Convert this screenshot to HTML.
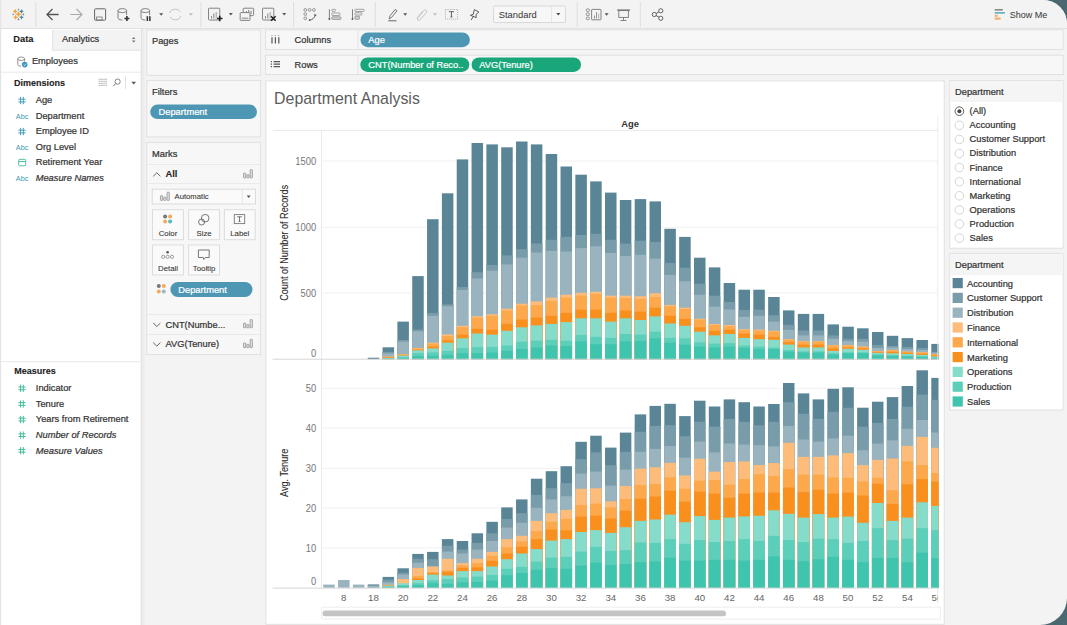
<!DOCTYPE html>
<html><head><meta charset="utf-8">
<style>
html,body{margin:0;padding:0;width:1067px;height:625px;overflow:hidden;background:#4b6871;}
#app{position:absolute;left:0;top:0;width:1067px;height:625px;background:#f3f3f3;border-top-right-radius:24px;border-bottom-right-radius:27px;overflow:hidden;}
svg{position:absolute;left:0;top:0;}
svg text{font-family:"Liberation Sans", sans-serif;}
.tx{stroke-width:0.22px;}
</style></head><body>
<div id="app">
<svg width="1067" height="625" viewBox="0 0 1067 625">
  <rect x="0" y="0" width="1067" height="28" fill="#f3f3f3"/>
  <rect x="0" y="28.2" width="1067" height="0.9" fill="#dcdcdc"/>
  <rect x="0" y="0" width="1.3" height="625" fill="#e4e4e4"/>
  <!-- data pane -->
  <rect x="1.3" y="29" width="139.7" height="596" fill="#ffffff"/>
  <rect x="140.6" y="29" width="1.4" height="596" fill="#e4e4e4"/>
  <rect x="142" y="29" width="2.5" height="596" fill="#ececec"/>
  <rect x="52.3" y="29.8" width="88.3" height="20.4" fill="#f3f3f3"/>
  <rect x="52.3" y="29.8" width="0.9" height="20.4" fill="#dedede"/>
  <rect x="52.3" y="49.8" width="88.3" height="0.9" fill="#dedede"/>
  <rect x="1.3" y="71.7" width="139.3" height="0.9" fill="#e6e6e6"/>
  <rect x="1.3" y="361.3" width="139.3" height="0.9" fill="#e6e6e6"/>
  <text class="tx" x="13.3" y="42.4" font-size="9.3" fill="#222" stroke="#222" font-weight="bold" font-style="normal" text-anchor="start"  style="stroke-width:0.1px">Data</text>
<text class="tx" x="62" y="42.4" font-size="9.3" fill="#333" stroke="#333" font-weight="normal" font-style="normal" text-anchor="start"  >Analytics</text>
<path d="M131.9,39 L133.7,37 L135.5,39Z M131.9,40.6 L133.7,42.6 L135.5,40.6Z" fill="#777"/>
<path d="M17.8,58.8 V64.5 Q17.8,66.3 21,66.3 M24.6,58.8 V61.5 M17.8,58.8 Q17.8,57 21.2,57 Q24.6,57 24.6,58.8 Q24.6,60.5 21.2,60.5 Q17.8,60.5 17.8,58.8" fill="none" stroke="#888" stroke-width="0.9"/>
<circle cx="24.7" cy="64.6" r="2.8" fill="#3a98c4"/><path d="M23.5,64.7 L24.4,65.6 L26,63.7" fill="none" stroke="#fff" stroke-width="0.7"/>
<text class="tx" x="31.9" y="64.4" font-size="9.3" fill="#333" stroke="#333" font-weight="normal" font-style="normal" text-anchor="start"  >Employees</text>
<text class="tx" x="14.1" y="86" font-size="9.0" fill="#222" stroke="#222" font-weight="bold" font-style="normal" text-anchor="start"  style="stroke-width:0.1px">Dimensions</text>
<path d="M98.6,79.3 H107 M98.6,81.3 H107 M98.6,83.3 H107 M98.6,85.3 H107" stroke="#aaa" stroke-width="0.9"/>
<path d="M100.6,79 V85.8 M103,79 V85.8 M105.2,79 V85.8" stroke="#fff" stroke-width="0.5"/>
<circle cx="117.6" cy="81.6" r="2.6" fill="none" stroke="#777" stroke-width="0.9"/><path d="M115.7,83.6 L113.3,86.2" stroke="#777" stroke-width="1"/>
<rect x="125" y="76" width="0.8" height="13" fill="#ddd"/>
<path d="M131.4,81.7 L136,81.7 L133.7,84.4Z" fill="#555"/>
<path d="M20.599999999999998,96.89999999999999 V104.19999999999999 M23.299999999999997,96.89999999999999 V104.19999999999999 M18.4,99.19999999999999 H25.599999999999998 M18.4,101.89999999999999 H25.599999999999998" stroke="#3d9bb8" stroke-width="0.95" fill="none"/>
<text class="tx" x="35.7" y="103.3" font-size="9.3" fill="#333" stroke="#333" font-weight="normal" font-style="normal" text-anchor="start"  >Age</text>
<text x="15.8" y="118.5" font-size="7.3" fill="#3d9bb8">Abc</text>
<text class="tx" x="35.7" y="118.8" font-size="9.3" fill="#333" stroke="#333" font-weight="normal" font-style="normal" text-anchor="start"  >Department</text>
<path d="M20.599999999999998,127.9 V135.20000000000002 M23.299999999999997,127.9 V135.20000000000002 M18.4,130.20000000000002 H25.599999999999998 M18.4,132.9 H25.599999999999998" stroke="#3d9bb8" stroke-width="0.95" fill="none"/>
<text class="tx" x="35.7" y="134.3" font-size="9.3" fill="#333" stroke="#333" font-weight="normal" font-style="normal" text-anchor="start"  >Employee ID</text>
<text x="15.8" y="149.5" font-size="7.3" fill="#3d9bb8">Abc</text>
<text class="tx" x="35.7" y="149.8" font-size="9.3" fill="#333" stroke="#333" font-weight="normal" font-style="normal" text-anchor="start"  >Org Level</text>
<rect x="18.7" y="159.3" width="7" height="6.5" rx="1" fill="none" stroke="#3fb89a" stroke-width="0.9"/><rect x="18.7" y="161.10000000000002" width="7" height="0.9" fill="#3fb89a"/>
<text class="tx" x="35.7" y="165.3" font-size="9.3" fill="#333" stroke="#333" font-weight="normal" font-style="normal" text-anchor="start"  >Retirement Year</text>
<text x="15.8" y="180.5" font-size="7.3" fill="#3d9bb8">Abc</text>
<text class="tx" x="35.7" y="180.8" font-size="9.3" fill="#333" stroke="#333" font-weight="normal" font-style="italic" text-anchor="start"  >Measure Names</text>
<text class="tx" x="14.3" y="373.6" font-size="9.0" fill="#222" stroke="#222" font-weight="bold" font-style="normal" text-anchor="start"  style="stroke-width:0.1px">Measures</text>
<path d="M20.599999999999998,384.70000000000005 V392.00000000000006 M23.299999999999997,384.70000000000005 V392.00000000000006 M18.4,387.00000000000006 H25.599999999999998 M18.4,389.70000000000005 H25.599999999999998" stroke="#3fb89a" stroke-width="0.95" fill="none"/>
<text class="tx" x="35.8" y="391.1" font-size="9.3" fill="#333" stroke="#333" font-weight="normal" font-style="normal" text-anchor="start"  >Indicator</text>
<path d="M20.599999999999998,400.30000000000007 V407.6000000000001 M23.299999999999997,400.30000000000007 V407.6000000000001 M18.4,402.6000000000001 H25.599999999999998 M18.4,405.30000000000007 H25.599999999999998" stroke="#3fb89a" stroke-width="0.95" fill="none"/>
<text class="tx" x="35.8" y="406.70000000000005" font-size="9.3" fill="#333" stroke="#333" font-weight="normal" font-style="normal" text-anchor="start"  >Tenure</text>
<path d="M20.599999999999998,415.90000000000003 V423.20000000000005 M23.299999999999997,415.90000000000003 V423.20000000000005 M18.4,418.20000000000005 H25.599999999999998 M18.4,420.90000000000003 H25.599999999999998" stroke="#3fb89a" stroke-width="0.95" fill="none"/>
<text class="tx" x="35.8" y="422.3" font-size="9.3" fill="#333" stroke="#333" font-weight="normal" font-style="normal" text-anchor="start"  >Years from Retirement</text>
<path d="M20.599999999999998,431.50000000000006 V438.80000000000007 M23.299999999999997,431.50000000000006 V438.80000000000007 M18.4,433.80000000000007 H25.599999999999998 M18.4,436.50000000000006 H25.599999999999998" stroke="#3fb89a" stroke-width="0.95" fill="none"/>
<text class="tx" x="35.8" y="437.90000000000003" font-size="9.3" fill="#333" stroke="#333" font-weight="normal" font-style="italic" text-anchor="start"  >Number of Records</text>
<path d="M20.599999999999998,447.1 V454.40000000000003 M23.299999999999997,447.1 V454.40000000000003 M18.4,449.40000000000003 H25.599999999999998 M18.4,452.1 H25.599999999999998" stroke="#3fb89a" stroke-width="0.95" fill="none"/>
<text class="tx" x="35.8" y="453.5" font-size="9.3" fill="#333" stroke="#333" font-weight="normal" font-style="italic" text-anchor="start"  >Measure Values</text>
  <!-- middle column cards -->
  <rect x="146.8" y="30" width="113.8" height="45.3" fill="#f7f7f7" stroke="#dedede" stroke-width="0.9"/>
  <text class="tx" x="152" y="44.2" font-size="9.3" fill="#333" stroke="#333" font-weight="normal" font-style="normal" text-anchor="start"  >Pages</text>
  <rect x="146.8" y="80.6" width="113.8" height="56.3" fill="#f7f7f7" stroke="#dedede" stroke-width="0.9"/>
  <text class="tx" x="152" y="94.6" font-size="9.3" fill="#333" stroke="#333" font-weight="normal" font-style="normal" text-anchor="start"  >Filters</text>
  <rect x="150.2" y="104.5" width="106.8" height="14.6" rx="7.3" fill="#4e97b4"/>
  <text class="tx" x="158.5" y="115.1" font-size="9.3" fill="#fff" stroke="#fff" font-weight="normal" font-style="normal" text-anchor="start"  >Department</text>
  <rect x="146.8" y="142.3" width="113.8" height="212.3" fill="#f7f7f7" stroke="#dedede" stroke-width="0.9"/>
  <text class="tx" x="152" y="156.9" font-size="9.3" fill="#333" stroke="#333" font-weight="normal" font-style="normal" text-anchor="start"  >Marks</text>
<rect x="147" y="164" width="113.5" height="0.8" fill="#e6e6e6"/>
<path d="M153.2,176.3 L156.79999999999998,172.8 L160.39999999999998,176.3" fill="none" stroke="#666" stroke-width="1"/>
<text class="tx" x="165.5" y="177.3" font-size="9.3" fill="#222" stroke="#222" font-weight="bold" font-style="normal" text-anchor="start"  style="stroke-width:0.1px">All</text>
<rect x="243.54999999999998" y="173.20000000000002" width="2.2" height="4.7" rx="0.5" fill="#e4e4e4" stroke="#8a8a8a" stroke-width="0.75"/><rect x="246.85" y="174.70000000000002" width="2.2" height="3.2" rx="0.5" fill="#e4e4e4" stroke="#8a8a8a" stroke-width="0.75"/><rect x="250.15" y="169.70000000000002" width="2.2" height="8.2" rx="0.5" fill="#e4e4e4" stroke="#8a8a8a" stroke-width="0.75"/>
<rect x="147" y="183" width="113.5" height="0.8" fill="#e6e6e6"/>
<rect x="152.2" y="189.2" width="103.3" height="14.8" fill="#fafafa" stroke="#d8d8d8" stroke-width="0.9"/>
<rect x="241.8" y="189.6" width="0.8" height="14" fill="#e0e0e0"/>
<rect x="160.45" y="195.70000000000002" width="2.2" height="4.7" rx="0.5" fill="#e4e4e4" stroke="#8a8a8a" stroke-width="0.75"/><rect x="163.75" y="197.20000000000002" width="2.2" height="3.2" rx="0.5" fill="#e4e4e4" stroke="#8a8a8a" stroke-width="0.75"/><rect x="167.05" y="192.20000000000002" width="2.2" height="8.2" rx="0.5" fill="#e4e4e4" stroke="#8a8a8a" stroke-width="0.75"/>
<text class="tx" x="174.5" y="198.5" font-size="7.7" fill="#333" stroke="#333" font-weight="normal" font-style="normal" text-anchor="start" style="stroke-width:0.08px" >Automatic</text>
<path d="M246.7,195.60000000000002 L250.7,195.60000000000002 L248.7,198.10000000000002Z" fill="#555"/>
<rect x="152.54999999999998" y="209.75" width="30.8" height="30" fill="#fafafa" stroke="#d9d9d9" stroke-width="0.9"/>
<text class="tx" x="168.0" y="236.20000000000002" font-size="7.8" fill="#333" stroke="#333" font-weight="normal" font-style="normal" text-anchor="middle" style="stroke-width:0.08px" >Color</text>
<rect x="188.64999999999998" y="209.75" width="30.8" height="30" fill="#fafafa" stroke="#d9d9d9" stroke-width="0.9"/>
<text class="tx" x="204.1" y="236.20000000000002" font-size="7.8" fill="#333" stroke="#333" font-weight="normal" font-style="normal" text-anchor="middle" style="stroke-width:0.08px" >Size</text>
<rect x="224.35" y="209.75" width="30.8" height="30" fill="#fafafa" stroke="#d9d9d9" stroke-width="0.9"/>
<text class="tx" x="239.8" y="236.20000000000002" font-size="7.8" fill="#333" stroke="#333" font-weight="normal" font-style="normal" text-anchor="middle" style="stroke-width:0.08px" >Label</text>
<rect x="152.54999999999998" y="244.95" width="30.8" height="30" fill="#fafafa" stroke="#d9d9d9" stroke-width="0.9"/>
<text class="tx" x="168.0" y="271.4" font-size="7.8" fill="#333" stroke="#333" font-weight="normal" font-style="normal" text-anchor="middle" style="stroke-width:0.08px" >Detail</text>
<rect x="188.64999999999998" y="244.95" width="30.8" height="30" fill="#fafafa" stroke="#d9d9d9" stroke-width="0.9"/>
<text class="tx" x="204.1" y="271.4" font-size="7.8" fill="#333" stroke="#333" font-weight="normal" font-style="normal" text-anchor="middle" style="stroke-width:0.08px" >Tooltip</text>
<circle cx="165.1" cy="216.4" r="2" fill="#777"/><circle cx="170.1" cy="216.4" r="2" fill="#f5a95b"/><circle cx="165.1" cy="221.4" r="2" fill="#f5a95b"/><circle cx="170.1" cy="221.4" r="2" fill="#5ab8c0"/>
<circle cx="201.6" cy="222" r="3" fill="none" stroke="#666" stroke-width="0.9"/><circle cx="205.2" cy="218.2" r="3.8" fill="none" stroke="#666" stroke-width="0.9"/>
<rect x="234.3" y="214.6" width="10.4" height="9" fill="none" stroke="#777" stroke-width="0.9"/>
<path d="M237.1,216.8 H241.9 M239.5,216.8 V221.4 M238.5,221.4 H240.5" fill="none" stroke="#555" stroke-width="0.8"/>
<circle cx="167.6" cy="252.3" r="1.3" fill="#555"/>
<circle cx="163.2" cy="256.8" r="1.6" fill="none" stroke="#777" stroke-width="0.7"/>
<circle cx="167.6" cy="256.8" r="1.6" fill="none" stroke="#777" stroke-width="0.7"/>
<circle cx="172" cy="256.8" r="1.6" fill="none" stroke="#777" stroke-width="0.7"/>
<path d="M198.4,250 H209.2 V257.5 H205.5 L203.8,259.5 L203.2,257.5 H198.4 Z" fill="none" stroke="#666" stroke-width="0.9"/>
<circle cx="158.8" cy="286" r="2" fill="#777"/><circle cx="163.8" cy="286" r="2" fill="#f5a95b"/><circle cx="158.8" cy="291.4" r="2" fill="#f5a95b"/><circle cx="163.8" cy="291.4" r="2" fill="#9ab8c4"/>
<rect x="170.4" y="282.1" width="82.1" height="14.9" rx="7.45" fill="#4e97b4"/>
<text class="tx" x="178.3" y="292.9" font-size="9.3" fill="#fff" stroke="#fff" font-weight="normal" font-style="normal" text-anchor="start"  >Department</text>
<rect x="147" y="314" width="113.5" height="0.8" fill="#e6e6e6"/>
<path d="M153.2,323 L156.79999999999998,326.5 L160.39999999999998,323" fill="none" stroke="#666" stroke-width="1"/>
<text class="tx" x="165.5" y="327.6" font-size="9.3" fill="#333" stroke="#333" font-weight="normal" font-style="normal" text-anchor="start"  >CNT(Numbe...</text>
<rect x="243.54999999999998" y="323.09999999999997" width="2.2" height="4.7" rx="0.5" fill="#e4e4e4" stroke="#8a8a8a" stroke-width="0.75"/><rect x="246.85" y="324.59999999999997" width="2.2" height="3.2" rx="0.5" fill="#e4e4e4" stroke="#8a8a8a" stroke-width="0.75"/><rect x="250.15" y="319.59999999999997" width="2.2" height="8.2" rx="0.5" fill="#e4e4e4" stroke="#8a8a8a" stroke-width="0.75"/>
<rect x="147" y="334" width="113.5" height="0.8" fill="#e6e6e6"/>
<path d="M153.2,342.6 L156.79999999999998,346.1 L160.39999999999998,342.6" fill="none" stroke="#666" stroke-width="1"/>
<text class="tx" x="165.5" y="347.2" font-size="9.3" fill="#333" stroke="#333" font-weight="normal" font-style="normal" text-anchor="start"  >AVG(Tenure)</text>
<rect x="243.54999999999998" y="342.9" width="2.2" height="4.7" rx="0.5" fill="#e4e4e4" stroke="#8a8a8a" stroke-width="0.75"/><rect x="246.85" y="344.4" width="2.2" height="3.2" rx="0.5" fill="#e4e4e4" stroke="#8a8a8a" stroke-width="0.75"/><rect x="250.15" y="339.4" width="2.2" height="8.2" rx="0.5" fill="#e4e4e4" stroke="#8a8a8a" stroke-width="0.75"/>
  <!-- shelves -->
  <rect x="265.6" y="29.9" width="797.6" height="19.6" fill="#f7f7f7" stroke="#dedede" stroke-width="0.9"/>
  <rect x="265.6" y="55.2" width="797.6" height="19.4" fill="#f7f7f7" stroke="#dedede" stroke-width="0.9"/>
  <rect x="357.5" y="30.3" width="0.9" height="18.8" fill="#e0e0e0"/>
  <rect x="357.5" y="55.6" width="0.9" height="18.6" fill="#e0e0e0"/>
  <path d="M272,37.2 V43.6 M275.4,37.2 V43.6 M278.8,37.2 V43.6" stroke="#555" stroke-width="1.2"/>
  <path d="M272,35.4 V36 M275.4,35.4 V36 M278.8,35.4 V36" stroke="#555" stroke-width="1.2"/>
  <path d="M273.6,61.6 H280 M273.6,64.1 H280 M273.6,66.6 H280" stroke="#555" stroke-width="1.1"/>
  <path d="M270.8,61.6 H272 M270.8,64.1 H272 M270.8,66.6 H272" stroke="#555" stroke-width="1.1"/>
  <text class="tx" x="294.5" y="43" font-size="9.3" fill="#333" stroke="#333" font-weight="normal" font-style="normal" text-anchor="start"  >Columns</text>
  <text class="tx" x="294.5" y="68.3" font-size="9.3" fill="#333" stroke="#333" font-weight="normal" font-style="normal" text-anchor="start"  >Rows</text>
  <rect x="360.5" y="32.6" width="109.4" height="14.6" rx="7.3" fill="#4e97b4"/>
  <text class="tx" x="368.3" y="43.4" font-size="9.3" fill="#fff" stroke="#fff" font-weight="normal" font-style="normal" text-anchor="start"  >Age</text>
  <rect x="360.3" y="57.4" width="109" height="14.6" rx="7.3" fill="#19a67b"/>
  <text class="tx" x="368.3" y="68.3" font-size="9.3" fill="#fff" stroke="#fff" font-weight="normal" font-style="normal" text-anchor="start"  >CNT(Number of Reco..</text>
  <rect x="471.6" y="57.4" width="109.4" height="14.6" rx="7.3" fill="#19a67b"/>
  <text class="tx" x="479.3" y="68.3" font-size="9.3" fill="#fff" stroke="#fff" font-weight="normal" font-style="normal" text-anchor="start"  >AVG(Tenure)</text>
  <!-- viz pane -->
  <rect x="265.9" y="80.9" width="678.3" height="543.4" fill="#ffffff" stroke="#dedede" stroke-width="0.9"/>
  <text class="tx" x="274.1" y="104.3" font-size="15.9" fill="#5c5c5c" stroke="#5c5c5c" font-weight="normal" font-style="normal" text-anchor="start"  style="stroke:none">Department Analysis</text>
  <text class="tx" x="630" y="126.5" font-size="9.4" fill="#333" stroke="#333" font-weight="bold" font-style="normal" text-anchor="middle"  style="stroke:none">Age</text>
  <rect x="273" y="129.9" width="665" height="0.9" fill="#e6e6e6"/>
  <rect x="321" y="130" width="0.9" height="458.6" fill="#e8e8e8"/><rect x="321.3" y="607" width="0.8" height="12" fill="#ececec"/>
  <rect x="322" y="160.6" width="616" height="0.8" fill="#ededed"/>
  <rect x="322" y="226.8" width="616" height="0.8" fill="#ededed"/>
  <rect x="322" y="292.7" width="616" height="0.8" fill="#ededed"/>
  <g transform="translate(316.2,164.70) scale(1,1.14)"><text class="tx" x="0" y="0" font-size="9.4" fill="#777" stroke="#777" font-weight="normal" font-style="normal" text-anchor="end"  style="stroke:none">1500</text></g><g transform="translate(316.2,231.00) scale(1,1.14)"><text class="tx" x="0" y="0" font-size="9.4" fill="#777" stroke="#777" font-weight="normal" font-style="normal" text-anchor="end"  style="stroke:none">1000</text></g><g transform="translate(316.2,296.90) scale(1,1.14)"><text class="tx" x="0" y="0" font-size="9.4" fill="#777" stroke="#777" font-weight="normal" font-style="normal" text-anchor="end"  style="stroke:none">500</text></g><g transform="translate(316.2,357.00) scale(1,1.14)"><text class="tx" x="0" y="0" font-size="9.4" fill="#777" stroke="#777" font-weight="normal" font-style="normal" text-anchor="end"  style="stroke:none">0</text></g>
  <rect x="322" y="387.8" width="616" height="0.8" fill="#ededed"/>
  <rect x="322" y="427.6" width="616" height="0.8" fill="#ededed"/>
  <rect x="322" y="467.9" width="616" height="0.8" fill="#ededed"/>
  <rect x="322" y="507.6" width="616" height="0.8" fill="#ededed"/>
  <rect x="322" y="547.5" width="616" height="0.8" fill="#ededed"/>
  <g transform="translate(316.2,392.00) scale(1,1.14)"><text class="tx" x="0" y="0" font-size="9.4" fill="#777" stroke="#777" font-weight="normal" font-style="normal" text-anchor="end"  style="stroke:none">50</text></g><g transform="translate(316.2,431.70) scale(1,1.14)"><text class="tx" x="0" y="0" font-size="9.4" fill="#777" stroke="#777" font-weight="normal" font-style="normal" text-anchor="end"  style="stroke:none">40</text></g><g transform="translate(316.2,472.20) scale(1,1.14)"><text class="tx" x="0" y="0" font-size="9.4" fill="#777" stroke="#777" font-weight="normal" font-style="normal" text-anchor="end"  style="stroke:none">30</text></g><g transform="translate(316.2,511.80) scale(1,1.14)"><text class="tx" x="0" y="0" font-size="9.4" fill="#777" stroke="#777" font-weight="normal" font-style="normal" text-anchor="end"  style="stroke:none">20</text></g><g transform="translate(316.2,551.70) scale(1,1.14)"><text class="tx" x="0" y="0" font-size="9.4" fill="#777" stroke="#777" font-weight="normal" font-style="normal" text-anchor="end"  style="stroke:none">10</text></g><g transform="translate(316.2,584.70) scale(1,1.14)"><text class="tx" x="0" y="0" font-size="9.4" fill="#777" stroke="#777" font-weight="normal" font-style="normal" text-anchor="end"  style="stroke:none">0</text></g>
  <g><rect x="367.74" y="357.70" width="11.50" height="1.50" fill="#5a8596"/>
<rect x="382.57" y="347.30" width="11.50" height="11.90" fill="#5a8596"/>
<rect x="382.57" y="352.00" width="11.50" height="7.20" fill="#789ca9"/>
<rect x="382.57" y="353.50" width="11.50" height="5.70" fill="#9ab4bf"/>
<rect x="382.57" y="356.60" width="11.50" height="2.60" fill="#fdbc79"/>
<rect x="382.57" y="356.80" width="11.50" height="2.40" fill="#fca84b"/>
<rect x="382.57" y="357.20" width="11.50" height="2.00" fill="#f98f1d"/>
<rect x="382.57" y="357.90" width="11.50" height="1.30" fill="#86dccb"/>
<rect x="382.57" y="358.40" width="11.50" height="0.80" fill="#5ccfba"/>
<rect x="382.57" y="358.80" width="11.50" height="0.40" fill="#3fc4ae"/>
<rect x="397.40" y="321.60" width="11.50" height="37.60" fill="#5a8596"/>
<rect x="397.40" y="340.00" width="11.50" height="19.20" fill="#789ca9"/>
<rect x="397.40" y="341.70" width="11.50" height="17.50" fill="#9ab4bf"/>
<rect x="397.40" y="354.20" width="11.50" height="5.00" fill="#fdbc79"/>
<rect x="397.40" y="354.40" width="11.50" height="4.80" fill="#fca84b"/>
<rect x="397.40" y="355.00" width="11.50" height="4.20" fill="#f98f1d"/>
<rect x="397.40" y="355.50" width="11.50" height="3.70" fill="#86dccb"/>
<rect x="397.40" y="357.00" width="11.50" height="2.20" fill="#5ccfba"/>
<rect x="397.40" y="358.00" width="11.50" height="1.20" fill="#3fc4ae"/>
<rect x="412.23" y="276.10" width="11.50" height="83.10" fill="#5a8596"/>
<rect x="412.23" y="329.50" width="11.50" height="29.70" fill="#789ca9"/>
<rect x="412.23" y="331.20" width="11.50" height="28.00" fill="#9ab4bf"/>
<rect x="412.23" y="348.00" width="11.50" height="11.20" fill="#fdbc79"/>
<rect x="412.23" y="348.60" width="11.50" height="10.60" fill="#fca84b"/>
<rect x="412.23" y="349.60" width="11.50" height="9.60" fill="#f98f1d"/>
<rect x="412.23" y="350.30" width="11.50" height="8.90" fill="#86dccb"/>
<rect x="412.23" y="353.20" width="11.50" height="6.00" fill="#5ccfba"/>
<rect x="412.23" y="356.10" width="11.50" height="3.10" fill="#3fc4ae"/>
<rect x="427.06" y="219.20" width="11.50" height="140.00" fill="#5a8596"/>
<rect x="427.06" y="312.90" width="11.50" height="46.30" fill="#789ca9"/>
<rect x="427.06" y="315.80" width="11.50" height="43.40" fill="#9ab4bf"/>
<rect x="427.06" y="342.70" width="11.50" height="16.50" fill="#fdbc79"/>
<rect x="427.06" y="343.60" width="11.50" height="15.60" fill="#fca84b"/>
<rect x="427.06" y="346.50" width="11.50" height="12.70" fill="#f98f1d"/>
<rect x="427.06" y="348.40" width="11.50" height="10.80" fill="#86dccb"/>
<rect x="427.06" y="352.30" width="11.50" height="6.90" fill="#5ccfba"/>
<rect x="427.06" y="355.70" width="11.50" height="3.50" fill="#3fc4ae"/>
<rect x="441.89" y="193.30" width="11.50" height="165.90" fill="#5a8596"/>
<rect x="441.89" y="304.30" width="11.50" height="54.90" fill="#789ca9"/>
<rect x="441.89" y="306.20" width="11.50" height="53.00" fill="#9ab4bf"/>
<rect x="441.89" y="334.40" width="11.50" height="24.80" fill="#fdbc79"/>
<rect x="441.89" y="336.00" width="11.50" height="23.20" fill="#fca84b"/>
<rect x="441.89" y="340.20" width="11.50" height="19.00" fill="#f98f1d"/>
<rect x="441.89" y="342.70" width="11.50" height="16.50" fill="#86dccb"/>
<rect x="441.89" y="350.90" width="11.50" height="8.30" fill="#5ccfba"/>
<rect x="441.89" y="354.80" width="11.50" height="4.40" fill="#3fc4ae"/>
<rect x="456.72" y="159.40" width="11.50" height="199.80" fill="#5a8596"/>
<rect x="456.72" y="287.00" width="11.50" height="72.20" fill="#789ca9"/>
<rect x="456.72" y="289.90" width="11.50" height="69.30" fill="#9ab4bf"/>
<rect x="456.72" y="325.80" width="11.50" height="33.40" fill="#fdbc79"/>
<rect x="456.72" y="327.30" width="11.50" height="31.90" fill="#fca84b"/>
<rect x="456.72" y="334.60" width="11.50" height="24.60" fill="#f98f1d"/>
<rect x="456.72" y="338.30" width="11.50" height="20.90" fill="#86dccb"/>
<rect x="456.72" y="348.00" width="11.50" height="11.20" fill="#5ccfba"/>
<rect x="456.72" y="353.20" width="11.50" height="6.00" fill="#3fc4ae"/>
<rect x="471.55" y="143.00" width="11.50" height="216.20" fill="#5a8596"/>
<rect x="471.55" y="272.20" width="11.50" height="87.00" fill="#789ca9"/>
<rect x="471.55" y="278.40" width="11.50" height="80.80" fill="#9ab4bf"/>
<rect x="471.55" y="316.20" width="11.50" height="43.00" fill="#fdbc79"/>
<rect x="471.55" y="317.70" width="11.50" height="41.50" fill="#fca84b"/>
<rect x="471.55" y="328.80" width="11.50" height="30.40" fill="#f98f1d"/>
<rect x="471.55" y="333.50" width="11.50" height="25.70" fill="#86dccb"/>
<rect x="471.55" y="347.10" width="11.50" height="12.10" fill="#5ccfba"/>
<rect x="471.55" y="353.20" width="11.50" height="6.00" fill="#3fc4ae"/>
<rect x="486.38" y="144.40" width="11.50" height="214.80" fill="#5a8596"/>
<rect x="486.38" y="265.00" width="11.50" height="94.20" fill="#789ca9"/>
<rect x="486.38" y="270.70" width="11.50" height="88.50" fill="#9ab4bf"/>
<rect x="486.38" y="314.30" width="11.50" height="44.90" fill="#fdbc79"/>
<rect x="486.38" y="315.80" width="11.50" height="43.40" fill="#fca84b"/>
<rect x="486.38" y="329.80" width="11.50" height="29.40" fill="#f98f1d"/>
<rect x="486.38" y="334.60" width="11.50" height="24.60" fill="#86dccb"/>
<rect x="486.38" y="346.90" width="11.50" height="12.30" fill="#5ccfba"/>
<rect x="486.38" y="352.60" width="11.50" height="6.60" fill="#3fc4ae"/>
<rect x="501.21" y="147.30" width="11.50" height="211.90" fill="#5a8596"/>
<rect x="501.21" y="255.40" width="11.50" height="103.80" fill="#789ca9"/>
<rect x="501.21" y="264.40" width="11.50" height="94.80" fill="#9ab4bf"/>
<rect x="501.21" y="308.70" width="11.50" height="50.50" fill="#fdbc79"/>
<rect x="501.21" y="310.60" width="11.50" height="48.60" fill="#fca84b"/>
<rect x="501.21" y="323.90" width="11.50" height="35.30" fill="#f98f1d"/>
<rect x="501.21" y="330.80" width="11.50" height="28.40" fill="#86dccb"/>
<rect x="501.21" y="345.50" width="11.50" height="13.70" fill="#5ccfba"/>
<rect x="501.21" y="350.70" width="11.50" height="8.50" fill="#3fc4ae"/>
<rect x="516.04" y="141.50" width="11.50" height="217.70" fill="#5a8596"/>
<rect x="516.04" y="249.20" width="11.50" height="110.00" fill="#789ca9"/>
<rect x="516.04" y="257.70" width="11.50" height="101.50" fill="#9ab4bf"/>
<rect x="516.04" y="303.70" width="11.50" height="55.50" fill="#fdbc79"/>
<rect x="516.04" y="305.60" width="11.50" height="53.60" fill="#fca84b"/>
<rect x="516.04" y="319.60" width="11.50" height="39.60" fill="#f98f1d"/>
<rect x="516.04" y="327.30" width="11.50" height="31.90" fill="#86dccb"/>
<rect x="516.04" y="341.70" width="11.50" height="17.50" fill="#5ccfba"/>
<rect x="516.04" y="349.00" width="11.50" height="10.20" fill="#3fc4ae"/>
<rect x="530.87" y="144.40" width="11.50" height="214.80" fill="#5a8596"/>
<rect x="530.87" y="243.50" width="11.50" height="115.70" fill="#789ca9"/>
<rect x="530.87" y="252.50" width="11.50" height="106.70" fill="#9ab4bf"/>
<rect x="530.87" y="301.40" width="11.50" height="57.80" fill="#fdbc79"/>
<rect x="530.87" y="305.20" width="11.50" height="54.00" fill="#fca84b"/>
<rect x="530.87" y="317.70" width="11.50" height="41.50" fill="#f98f1d"/>
<rect x="530.87" y="325.40" width="11.50" height="33.80" fill="#86dccb"/>
<rect x="530.87" y="340.70" width="11.50" height="18.50" fill="#5ccfba"/>
<rect x="530.87" y="347.50" width="11.50" height="11.70" fill="#3fc4ae"/>
<rect x="545.70" y="154.00" width="11.50" height="205.20" fill="#5a8596"/>
<rect x="545.70" y="239.80" width="11.50" height="119.40" fill="#789ca9"/>
<rect x="545.70" y="250.90" width="11.50" height="108.30" fill="#9ab4bf"/>
<rect x="545.70" y="297.60" width="11.50" height="61.60" fill="#fdbc79"/>
<rect x="545.70" y="301.00" width="11.50" height="58.20" fill="#fca84b"/>
<rect x="545.70" y="315.80" width="11.50" height="43.40" fill="#f98f1d"/>
<rect x="545.70" y="323.90" width="11.50" height="35.30" fill="#86dccb"/>
<rect x="545.70" y="339.80" width="11.50" height="19.40" fill="#5ccfba"/>
<rect x="545.70" y="345.50" width="11.50" height="13.70" fill="#3fc4ae"/>
<rect x="560.53" y="166.50" width="11.50" height="192.70" fill="#5a8596"/>
<rect x="560.53" y="236.90" width="11.50" height="122.30" fill="#789ca9"/>
<rect x="560.53" y="251.50" width="11.50" height="107.70" fill="#9ab4bf"/>
<rect x="560.53" y="294.70" width="11.50" height="64.50" fill="#fdbc79"/>
<rect x="560.53" y="297.60" width="11.50" height="61.60" fill="#fca84b"/>
<rect x="560.53" y="312.90" width="11.50" height="46.30" fill="#f98f1d"/>
<rect x="560.53" y="322.10" width="11.50" height="37.10" fill="#86dccb"/>
<rect x="560.53" y="340.70" width="11.50" height="18.50" fill="#5ccfba"/>
<rect x="560.53" y="346.10" width="11.50" height="13.10" fill="#3fc4ae"/>
<rect x="575.36" y="174.70" width="11.50" height="184.50" fill="#5a8596"/>
<rect x="575.36" y="235.00" width="11.50" height="124.20" fill="#789ca9"/>
<rect x="575.36" y="248.10" width="11.50" height="111.10" fill="#9ab4bf"/>
<rect x="575.36" y="292.80" width="11.50" height="66.40" fill="#fdbc79"/>
<rect x="575.36" y="295.70" width="11.50" height="63.50" fill="#fca84b"/>
<rect x="575.36" y="309.70" width="11.50" height="49.50" fill="#f98f1d"/>
<rect x="575.36" y="318.30" width="11.50" height="40.90" fill="#86dccb"/>
<rect x="575.36" y="335.00" width="11.50" height="24.20" fill="#5ccfba"/>
<rect x="575.36" y="341.30" width="11.50" height="17.90" fill="#3fc4ae"/>
<rect x="590.19" y="181.40" width="11.50" height="177.80" fill="#5a8596"/>
<rect x="590.19" y="233.80" width="11.50" height="125.40" fill="#789ca9"/>
<rect x="590.19" y="246.30" width="11.50" height="112.90" fill="#9ab4bf"/>
<rect x="590.19" y="291.80" width="11.50" height="67.40" fill="#fdbc79"/>
<rect x="590.19" y="294.10" width="11.50" height="65.10" fill="#fca84b"/>
<rect x="590.19" y="309.70" width="11.50" height="49.50" fill="#f98f1d"/>
<rect x="590.19" y="318.30" width="11.50" height="40.90" fill="#86dccb"/>
<rect x="590.19" y="336.90" width="11.50" height="22.30" fill="#5ccfba"/>
<rect x="590.19" y="344.20" width="11.50" height="15.00" fill="#3fc4ae"/>
<rect x="605.02" y="192.60" width="11.50" height="166.60" fill="#5a8596"/>
<rect x="605.02" y="239.80" width="11.50" height="119.40" fill="#789ca9"/>
<rect x="605.02" y="253.00" width="11.50" height="106.20" fill="#9ab4bf"/>
<rect x="605.02" y="295.70" width="11.50" height="63.50" fill="#fdbc79"/>
<rect x="605.02" y="297.60" width="11.50" height="61.60" fill="#fca84b"/>
<rect x="605.02" y="312.90" width="11.50" height="46.30" fill="#f98f1d"/>
<rect x="605.02" y="321.60" width="11.50" height="37.60" fill="#86dccb"/>
<rect x="605.02" y="337.90" width="11.50" height="21.30" fill="#5ccfba"/>
<rect x="605.02" y="344.20" width="11.50" height="15.00" fill="#3fc4ae"/>
<rect x="619.85" y="200.00" width="11.50" height="159.20" fill="#5a8596"/>
<rect x="619.85" y="243.60" width="11.50" height="115.60" fill="#789ca9"/>
<rect x="619.85" y="255.90" width="11.50" height="103.30" fill="#9ab4bf"/>
<rect x="619.85" y="295.70" width="11.50" height="63.50" fill="#fdbc79"/>
<rect x="619.85" y="298.00" width="11.50" height="61.20" fill="#fca84b"/>
<rect x="619.85" y="310.60" width="11.50" height="48.60" fill="#f98f1d"/>
<rect x="619.85" y="318.30" width="11.50" height="40.90" fill="#86dccb"/>
<rect x="619.85" y="334.00" width="11.50" height="25.20" fill="#5ccfba"/>
<rect x="619.85" y="341.30" width="11.50" height="17.90" fill="#3fc4ae"/>
<rect x="634.68" y="199.10" width="11.50" height="160.10" fill="#5a8596"/>
<rect x="634.68" y="240.70" width="11.50" height="118.50" fill="#789ca9"/>
<rect x="634.68" y="254.80" width="11.50" height="104.40" fill="#9ab4bf"/>
<rect x="634.68" y="296.20" width="11.50" height="63.00" fill="#fdbc79"/>
<rect x="634.68" y="298.90" width="11.50" height="60.30" fill="#fca84b"/>
<rect x="634.68" y="311.60" width="11.50" height="47.60" fill="#f98f1d"/>
<rect x="634.68" y="320.00" width="11.50" height="39.20" fill="#86dccb"/>
<rect x="634.68" y="334.60" width="11.50" height="24.60" fill="#5ccfba"/>
<rect x="634.68" y="341.10" width="11.50" height="18.10" fill="#3fc4ae"/>
<rect x="649.51" y="201.40" width="11.50" height="157.80" fill="#5a8596"/>
<rect x="649.51" y="241.90" width="11.50" height="117.30" fill="#789ca9"/>
<rect x="649.51" y="258.60" width="11.50" height="100.60" fill="#9ab4bf"/>
<rect x="649.51" y="293.20" width="11.50" height="66.00" fill="#fdbc79"/>
<rect x="649.51" y="297.00" width="11.50" height="62.20" fill="#fca84b"/>
<rect x="649.51" y="307.70" width="11.50" height="51.50" fill="#f98f1d"/>
<rect x="649.51" y="316.40" width="11.50" height="42.80" fill="#86dccb"/>
<rect x="649.51" y="331.70" width="11.50" height="27.50" fill="#5ccfba"/>
<rect x="649.51" y="338.40" width="11.50" height="20.80" fill="#3fc4ae"/>
<rect x="664.34" y="228.80" width="11.50" height="130.40" fill="#5a8596"/>
<rect x="664.34" y="263.00" width="11.50" height="96.20" fill="#789ca9"/>
<rect x="664.34" y="274.90" width="11.50" height="84.30" fill="#9ab4bf"/>
<rect x="664.34" y="304.90" width="11.50" height="54.30" fill="#fdbc79"/>
<rect x="664.34" y="306.20" width="11.50" height="53.00" fill="#fca84b"/>
<rect x="664.34" y="315.80" width="11.50" height="43.40" fill="#f98f1d"/>
<rect x="664.34" y="323.50" width="11.50" height="35.70" fill="#86dccb"/>
<rect x="664.34" y="337.90" width="11.50" height="21.30" fill="#5ccfba"/>
<rect x="664.34" y="342.70" width="11.50" height="16.50" fill="#3fc4ae"/>
<rect x="679.17" y="236.90" width="11.50" height="122.30" fill="#5a8596"/>
<rect x="679.17" y="267.80" width="11.50" height="91.40" fill="#789ca9"/>
<rect x="679.17" y="281.30" width="11.50" height="77.90" fill="#9ab4bf"/>
<rect x="679.17" y="307.70" width="11.50" height="51.50" fill="#fdbc79"/>
<rect x="679.17" y="309.10" width="11.50" height="50.10" fill="#fca84b"/>
<rect x="679.17" y="318.70" width="11.50" height="40.50" fill="#f98f1d"/>
<rect x="679.17" y="325.80" width="11.50" height="33.40" fill="#86dccb"/>
<rect x="679.17" y="338.30" width="11.50" height="20.90" fill="#5ccfba"/>
<rect x="679.17" y="344.60" width="11.50" height="14.60" fill="#3fc4ae"/>
<rect x="694.00" y="257.70" width="11.50" height="101.50" fill="#5a8596"/>
<rect x="694.00" y="283.80" width="11.50" height="75.40" fill="#789ca9"/>
<rect x="694.00" y="294.70" width="11.50" height="64.50" fill="#9ab4bf"/>
<rect x="694.00" y="318.70" width="11.50" height="40.50" fill="#fdbc79"/>
<rect x="694.00" y="319.60" width="11.50" height="39.60" fill="#fca84b"/>
<rect x="694.00" y="327.30" width="11.50" height="31.90" fill="#f98f1d"/>
<rect x="694.00" y="331.70" width="11.50" height="27.50" fill="#86dccb"/>
<rect x="694.00" y="342.30" width="11.50" height="16.90" fill="#5ccfba"/>
<rect x="694.00" y="346.50" width="11.50" height="12.70" fill="#3fc4ae"/>
<rect x="708.83" y="267.40" width="11.50" height="91.80" fill="#5a8596"/>
<rect x="708.83" y="295.70" width="11.50" height="63.50" fill="#789ca9"/>
<rect x="708.83" y="306.60" width="11.50" height="52.60" fill="#9ab4bf"/>
<rect x="708.83" y="324.10" width="11.50" height="35.10" fill="#fdbc79"/>
<rect x="708.83" y="325.00" width="11.50" height="34.20" fill="#fca84b"/>
<rect x="708.83" y="330.80" width="11.50" height="28.40" fill="#f98f1d"/>
<rect x="708.83" y="335.40" width="11.50" height="23.80" fill="#86dccb"/>
<rect x="708.83" y="343.60" width="11.50" height="15.60" fill="#5ccfba"/>
<rect x="708.83" y="347.50" width="11.50" height="11.70" fill="#3fc4ae"/>
<rect x="723.66" y="283.00" width="11.50" height="76.20" fill="#5a8596"/>
<rect x="723.66" y="302.00" width="11.50" height="57.20" fill="#789ca9"/>
<rect x="723.66" y="309.50" width="11.50" height="49.70" fill="#9ab4bf"/>
<rect x="723.66" y="325.00" width="11.50" height="34.20" fill="#fdbc79"/>
<rect x="723.66" y="326.40" width="11.50" height="32.80" fill="#fca84b"/>
<rect x="723.66" y="329.80" width="11.50" height="29.40" fill="#f98f1d"/>
<rect x="723.66" y="334.00" width="11.50" height="25.20" fill="#86dccb"/>
<rect x="723.66" y="343.10" width="11.50" height="16.10" fill="#5ccfba"/>
<rect x="723.66" y="346.50" width="11.50" height="12.70" fill="#3fc4ae"/>
<rect x="738.49" y="289.70" width="11.50" height="69.50" fill="#5a8596"/>
<rect x="738.49" y="310.00" width="11.50" height="49.20" fill="#789ca9"/>
<rect x="738.49" y="316.80" width="11.50" height="42.40" fill="#9ab4bf"/>
<rect x="738.49" y="329.20" width="11.50" height="30.00" fill="#fdbc79"/>
<rect x="738.49" y="330.20" width="11.50" height="29.00" fill="#fca84b"/>
<rect x="738.49" y="333.60" width="11.50" height="25.60" fill="#f98f1d"/>
<rect x="738.49" y="337.90" width="11.50" height="21.30" fill="#86dccb"/>
<rect x="738.49" y="345.50" width="11.50" height="13.70" fill="#5ccfba"/>
<rect x="738.49" y="347.80" width="11.50" height="11.40" fill="#3fc4ae"/>
<rect x="753.32" y="289.70" width="11.50" height="69.50" fill="#5a8596"/>
<rect x="753.32" y="309.70" width="11.50" height="49.50" fill="#789ca9"/>
<rect x="753.32" y="315.80" width="11.50" height="43.40" fill="#9ab4bf"/>
<rect x="753.32" y="329.60" width="11.50" height="29.60" fill="#fdbc79"/>
<rect x="753.32" y="330.60" width="11.50" height="28.60" fill="#fca84b"/>
<rect x="753.32" y="334.60" width="11.50" height="24.60" fill="#f98f1d"/>
<rect x="753.32" y="339.20" width="11.50" height="20.00" fill="#86dccb"/>
<rect x="753.32" y="346.50" width="11.50" height="12.70" fill="#5ccfba"/>
<rect x="753.32" y="349.00" width="11.50" height="10.20" fill="#3fc4ae"/>
<rect x="768.15" y="297.00" width="11.50" height="62.20" fill="#5a8596"/>
<rect x="768.15" y="315.20" width="11.50" height="44.00" fill="#789ca9"/>
<rect x="768.15" y="321.60" width="11.50" height="37.60" fill="#9ab4bf"/>
<rect x="768.15" y="330.80" width="11.50" height="28.40" fill="#fdbc79"/>
<rect x="768.15" y="331.70" width="11.50" height="27.50" fill="#fca84b"/>
<rect x="768.15" y="336.90" width="11.50" height="22.30" fill="#f98f1d"/>
<rect x="768.15" y="339.80" width="11.50" height="19.40" fill="#86dccb"/>
<rect x="768.15" y="347.50" width="11.50" height="11.70" fill="#5ccfba"/>
<rect x="768.15" y="349.00" width="11.50" height="10.20" fill="#3fc4ae"/>
<rect x="782.98" y="310.40" width="11.50" height="48.80" fill="#5a8596"/>
<rect x="782.98" y="324.80" width="11.50" height="34.40" fill="#789ca9"/>
<rect x="782.98" y="329.80" width="11.50" height="29.40" fill="#9ab4bf"/>
<rect x="782.98" y="339.20" width="11.50" height="20.00" fill="#fdbc79"/>
<rect x="782.98" y="339.80" width="11.50" height="19.40" fill="#fca84b"/>
<rect x="782.98" y="342.10" width="11.50" height="17.10" fill="#f98f1d"/>
<rect x="782.98" y="344.60" width="11.50" height="14.60" fill="#86dccb"/>
<rect x="782.98" y="350.00" width="11.50" height="9.20" fill="#5ccfba"/>
<rect x="782.98" y="351.70" width="11.50" height="7.50" fill="#3fc4ae"/>
<rect x="797.81" y="313.90" width="11.50" height="45.30" fill="#5a8596"/>
<rect x="797.81" y="330.60" width="11.50" height="28.60" fill="#789ca9"/>
<rect x="797.81" y="335.40" width="11.50" height="23.80" fill="#9ab4bf"/>
<rect x="797.81" y="341.10" width="11.50" height="18.10" fill="#fdbc79"/>
<rect x="797.81" y="341.70" width="11.50" height="17.50" fill="#fca84b"/>
<rect x="797.81" y="344.60" width="11.50" height="14.60" fill="#f98f1d"/>
<rect x="797.81" y="347.50" width="11.50" height="11.70" fill="#86dccb"/>
<rect x="797.81" y="351.30" width="11.50" height="7.90" fill="#5ccfba"/>
<rect x="797.81" y="352.60" width="11.50" height="6.60" fill="#3fc4ae"/>
<rect x="812.64" y="313.90" width="11.50" height="45.30" fill="#5a8596"/>
<rect x="812.64" y="330.60" width="11.50" height="28.60" fill="#789ca9"/>
<rect x="812.64" y="335.40" width="11.50" height="23.80" fill="#9ab4bf"/>
<rect x="812.64" y="341.10" width="11.50" height="18.10" fill="#fdbc79"/>
<rect x="812.64" y="341.70" width="11.50" height="17.50" fill="#fca84b"/>
<rect x="812.64" y="344.60" width="11.50" height="14.60" fill="#f98f1d"/>
<rect x="812.64" y="347.50" width="11.50" height="11.70" fill="#86dccb"/>
<rect x="812.64" y="351.30" width="11.50" height="7.90" fill="#5ccfba"/>
<rect x="812.64" y="352.60" width="11.50" height="6.60" fill="#3fc4ae"/>
<rect x="827.47" y="324.40" width="11.50" height="34.80" fill="#5a8596"/>
<rect x="827.47" y="335.40" width="11.50" height="23.80" fill="#789ca9"/>
<rect x="827.47" y="338.80" width="11.50" height="20.40" fill="#9ab4bf"/>
<rect x="827.47" y="345.00" width="11.50" height="14.20" fill="#fdbc79"/>
<rect x="827.47" y="345.50" width="11.50" height="13.70" fill="#fca84b"/>
<rect x="827.47" y="348.40" width="11.50" height="10.80" fill="#f98f1d"/>
<rect x="827.47" y="350.90" width="11.50" height="8.30" fill="#86dccb"/>
<rect x="827.47" y="353.20" width="11.50" height="6.00" fill="#5ccfba"/>
<rect x="827.47" y="354.60" width="11.50" height="4.60" fill="#3fc4ae"/>
<rect x="842.30" y="326.70" width="11.50" height="32.50" fill="#5a8596"/>
<rect x="842.30" y="338.80" width="11.50" height="20.40" fill="#789ca9"/>
<rect x="842.30" y="341.10" width="11.50" height="18.10" fill="#9ab4bf"/>
<rect x="842.30" y="345.00" width="11.50" height="14.20" fill="#fdbc79"/>
<rect x="842.30" y="345.50" width="11.50" height="13.70" fill="#fca84b"/>
<rect x="842.30" y="347.50" width="11.50" height="11.70" fill="#f98f1d"/>
<rect x="842.30" y="348.80" width="11.50" height="10.40" fill="#86dccb"/>
<rect x="842.30" y="352.30" width="11.50" height="6.90" fill="#5ccfba"/>
<rect x="842.30" y="353.20" width="11.50" height="6.00" fill="#3fc4ae"/>
<rect x="857.13" y="328.30" width="11.50" height="30.90" fill="#5a8596"/>
<rect x="857.13" y="338.80" width="11.50" height="20.40" fill="#789ca9"/>
<rect x="857.13" y="341.70" width="11.50" height="17.50" fill="#9ab4bf"/>
<rect x="857.13" y="346.50" width="11.50" height="12.70" fill="#fdbc79"/>
<rect x="857.13" y="347.10" width="11.50" height="12.10" fill="#fca84b"/>
<rect x="857.13" y="348.40" width="11.50" height="10.80" fill="#f98f1d"/>
<rect x="857.13" y="349.80" width="11.50" height="9.40" fill="#86dccb"/>
<rect x="857.13" y="352.30" width="11.50" height="6.90" fill="#5ccfba"/>
<rect x="857.13" y="353.20" width="11.50" height="6.00" fill="#3fc4ae"/>
<rect x="871.96" y="332.00" width="11.50" height="27.20" fill="#5a8596"/>
<rect x="871.96" y="345.10" width="11.50" height="14.10" fill="#789ca9"/>
<rect x="871.96" y="348.00" width="11.50" height="11.20" fill="#9ab4bf"/>
<rect x="871.96" y="350.90" width="11.50" height="8.30" fill="#fdbc79"/>
<rect x="871.96" y="351.20" width="11.50" height="8.00" fill="#fca84b"/>
<rect x="871.96" y="352.00" width="11.50" height="7.20" fill="#f98f1d"/>
<rect x="871.96" y="352.80" width="11.50" height="6.40" fill="#86dccb"/>
<rect x="871.96" y="354.20" width="11.50" height="5.00" fill="#5ccfba"/>
<rect x="871.96" y="355.50" width="11.50" height="3.70" fill="#3fc4ae"/>
<rect x="886.79" y="335.80" width="11.50" height="23.40" fill="#5a8596"/>
<rect x="886.79" y="345.90" width="11.50" height="13.30" fill="#789ca9"/>
<rect x="886.79" y="347.50" width="11.50" height="11.70" fill="#9ab4bf"/>
<rect x="886.79" y="350.10" width="11.50" height="9.10" fill="#fdbc79"/>
<rect x="886.79" y="350.50" width="11.50" height="8.70" fill="#fca84b"/>
<rect x="886.79" y="351.80" width="11.50" height="7.40" fill="#f98f1d"/>
<rect x="886.79" y="353.30" width="11.50" height="5.90" fill="#86dccb"/>
<rect x="886.79" y="355.00" width="11.50" height="4.20" fill="#5ccfba"/>
<rect x="886.79" y="356.00" width="11.50" height="3.20" fill="#3fc4ae"/>
<rect x="901.62" y="338.10" width="11.50" height="21.10" fill="#5a8596"/>
<rect x="901.62" y="347.00" width="11.50" height="12.20" fill="#789ca9"/>
<rect x="901.62" y="349.00" width="11.50" height="10.20" fill="#9ab4bf"/>
<rect x="901.62" y="351.50" width="11.50" height="7.70" fill="#fdbc79"/>
<rect x="901.62" y="351.80" width="11.50" height="7.40" fill="#fca84b"/>
<rect x="901.62" y="352.80" width="11.50" height="6.40" fill="#f98f1d"/>
<rect x="901.62" y="353.90" width="11.50" height="5.30" fill="#86dccb"/>
<rect x="901.62" y="355.50" width="11.50" height="3.70" fill="#5ccfba"/>
<rect x="901.62" y="356.50" width="11.50" height="2.70" fill="#3fc4ae"/>
<rect x="916.45" y="340.00" width="11.50" height="19.20" fill="#5a8596"/>
<rect x="916.45" y="348.00" width="11.50" height="11.20" fill="#789ca9"/>
<rect x="916.45" y="350.00" width="11.50" height="9.20" fill="#9ab4bf"/>
<rect x="916.45" y="352.30" width="11.50" height="6.90" fill="#fdbc79"/>
<rect x="916.45" y="352.60" width="11.50" height="6.60" fill="#fca84b"/>
<rect x="916.45" y="353.80" width="11.50" height="5.40" fill="#f98f1d"/>
<rect x="916.45" y="354.90" width="11.50" height="4.30" fill="#86dccb"/>
<rect x="916.45" y="356.20" width="11.50" height="3.00" fill="#5ccfba"/>
<rect x="916.45" y="357.00" width="11.50" height="2.20" fill="#3fc4ae"/>
<rect x="931.28" y="343.90" width="7.22" height="15.30" fill="#5a8596"/>
<rect x="931.28" y="351.80" width="7.22" height="7.40" fill="#789ca9"/>
<rect x="931.28" y="352.50" width="7.22" height="6.70" fill="#9ab4bf"/>
<rect x="931.28" y="354.00" width="7.22" height="5.20" fill="#fdbc79"/>
<rect x="931.28" y="354.20" width="7.22" height="5.00" fill="#fca84b"/>
<rect x="931.28" y="355.20" width="7.22" height="4.00" fill="#f98f1d"/>
<rect x="931.28" y="356.40" width="7.22" height="2.80" fill="#86dccb"/>
<rect x="931.28" y="357.30" width="7.22" height="1.90" fill="#5ccfba"/>
<rect x="931.28" y="358.00" width="7.22" height="1.20" fill="#3fc4ae"/></g>
  <g><rect x="323.25" y="584.60" width="11.50" height="3.20" fill="#9ab4bf"/>
<rect x="338.08" y="580.00" width="11.50" height="7.80" fill="#9ab4bf"/>
<rect x="352.91" y="584.60" width="11.50" height="3.20" fill="#9ab4bf"/>
<rect x="367.74" y="584.40" width="11.50" height="3.40" fill="#5a8596"/>
<rect x="367.74" y="585.50" width="11.50" height="2.30" fill="#9ab4bf"/>
<rect x="382.57" y="576.90" width="11.50" height="10.90" fill="#5a8596"/>
<rect x="382.57" y="579.80" width="11.50" height="8.00" fill="#789ca9"/>
<rect x="382.57" y="582.30" width="11.50" height="5.50" fill="#9ab4bf"/>
<rect x="382.57" y="584.80" width="11.50" height="3.00" fill="#fdbc79"/>
<rect x="382.57" y="585.20" width="11.50" height="2.60" fill="#fca84b"/>
<rect x="382.57" y="585.50" width="11.50" height="2.30" fill="#f98f1d"/>
<rect x="382.57" y="585.70" width="11.50" height="2.10" fill="#86dccb"/>
<rect x="382.57" y="586.50" width="11.50" height="1.30" fill="#5ccfba"/>
<rect x="382.57" y="587.20" width="11.50" height="0.60" fill="#3fc4ae"/>
<rect x="397.40" y="568.30" width="11.50" height="19.50" fill="#5a8596"/>
<rect x="397.40" y="572.70" width="11.50" height="15.10" fill="#789ca9"/>
<rect x="397.40" y="574.60" width="11.50" height="13.20" fill="#9ab4bf"/>
<rect x="397.40" y="579.00" width="11.50" height="8.80" fill="#fdbc79"/>
<rect x="397.40" y="583.20" width="11.50" height="4.60" fill="#86dccb"/>
<rect x="397.40" y="585.10" width="11.50" height="2.70" fill="#5ccfba"/>
<rect x="397.40" y="586.00" width="11.50" height="1.80" fill="#3fc4ae"/>
<rect x="412.23" y="553.90" width="11.50" height="33.90" fill="#5a8596"/>
<rect x="412.23" y="558.80" width="11.50" height="29.00" fill="#789ca9"/>
<rect x="412.23" y="562.70" width="11.50" height="25.10" fill="#9ab4bf"/>
<rect x="412.23" y="567.90" width="11.50" height="19.90" fill="#fdbc79"/>
<rect x="412.23" y="576.10" width="11.50" height="11.70" fill="#fca84b"/>
<rect x="412.23" y="578.40" width="11.50" height="9.40" fill="#f98f1d"/>
<rect x="412.23" y="580.00" width="11.50" height="7.80" fill="#86dccb"/>
<rect x="412.23" y="583.20" width="11.50" height="4.60" fill="#5ccfba"/>
<rect x="412.23" y="585.10" width="11.50" height="2.70" fill="#3fc4ae"/>
<rect x="427.06" y="551.90" width="11.50" height="35.90" fill="#5a8596"/>
<rect x="427.06" y="559.20" width="11.50" height="28.60" fill="#789ca9"/>
<rect x="427.06" y="566.30" width="11.50" height="21.50" fill="#9ab4bf"/>
<rect x="427.06" y="566.50" width="11.50" height="21.30" fill="#fdbc79"/>
<rect x="427.06" y="572.30" width="11.50" height="15.50" fill="#fca84b"/>
<rect x="427.06" y="573.00" width="11.50" height="14.80" fill="#f98f1d"/>
<rect x="427.06" y="574.60" width="11.50" height="13.20" fill="#86dccb"/>
<rect x="427.06" y="580.30" width="11.50" height="7.50" fill="#5ccfba"/>
<rect x="427.06" y="583.20" width="11.50" height="4.60" fill="#3fc4ae"/>
<rect x="441.89" y="539.10" width="11.50" height="48.70" fill="#5a8596"/>
<rect x="441.89" y="545.80" width="11.50" height="42.00" fill="#789ca9"/>
<rect x="441.89" y="551.60" width="11.50" height="36.20" fill="#9ab4bf"/>
<rect x="441.89" y="558.80" width="11.50" height="29.00" fill="#fdbc79"/>
<rect x="441.89" y="570.40" width="11.50" height="17.40" fill="#fca84b"/>
<rect x="441.89" y="571.70" width="11.50" height="16.10" fill="#f98f1d"/>
<rect x="441.89" y="575.50" width="11.50" height="12.30" fill="#86dccb"/>
<rect x="441.89" y="579.00" width="11.50" height="8.80" fill="#5ccfba"/>
<rect x="441.89" y="583.80" width="11.50" height="4.00" fill="#3fc4ae"/>
<rect x="456.72" y="541.00" width="11.50" height="46.80" fill="#5a8596"/>
<rect x="456.72" y="549.60" width="11.50" height="38.20" fill="#789ca9"/>
<rect x="456.72" y="553.50" width="11.50" height="34.30" fill="#9ab4bf"/>
<rect x="456.72" y="563.10" width="11.50" height="24.70" fill="#fdbc79"/>
<rect x="456.72" y="565.40" width="11.50" height="22.40" fill="#fca84b"/>
<rect x="456.72" y="567.90" width="11.50" height="19.90" fill="#f98f1d"/>
<rect x="456.72" y="571.10" width="11.50" height="16.70" fill="#86dccb"/>
<rect x="456.72" y="577.50" width="11.50" height="10.30" fill="#5ccfba"/>
<rect x="456.72" y="582.30" width="11.50" height="5.50" fill="#3fc4ae"/>
<rect x="471.55" y="533.30" width="11.50" height="54.50" fill="#5a8596"/>
<rect x="471.55" y="542.90" width="11.50" height="44.90" fill="#789ca9"/>
<rect x="471.55" y="549.60" width="11.50" height="38.20" fill="#9ab4bf"/>
<rect x="471.55" y="558.80" width="11.50" height="29.00" fill="#fdbc79"/>
<rect x="471.55" y="563.10" width="11.50" height="24.70" fill="#fca84b"/>
<rect x="471.55" y="567.30" width="11.50" height="20.50" fill="#f98f1d"/>
<rect x="471.55" y="571.10" width="11.50" height="16.70" fill="#86dccb"/>
<rect x="471.55" y="576.50" width="11.50" height="11.30" fill="#5ccfba"/>
<rect x="471.55" y="581.90" width="11.50" height="5.90" fill="#3fc4ae"/>
<rect x="486.38" y="521.80" width="11.50" height="66.00" fill="#5a8596"/>
<rect x="486.38" y="533.30" width="11.50" height="54.50" fill="#789ca9"/>
<rect x="486.38" y="541.00" width="11.50" height="46.80" fill="#9ab4bf"/>
<rect x="486.38" y="551.90" width="11.50" height="35.90" fill="#fdbc79"/>
<rect x="486.38" y="555.80" width="11.50" height="32.00" fill="#fca84b"/>
<rect x="486.38" y="560.80" width="11.50" height="27.00" fill="#f98f1d"/>
<rect x="486.38" y="566.50" width="11.50" height="21.30" fill="#86dccb"/>
<rect x="486.38" y="575.00" width="11.50" height="12.80" fill="#5ccfba"/>
<rect x="486.38" y="580.70" width="11.50" height="7.10" fill="#3fc4ae"/>
<rect x="501.21" y="507.40" width="11.50" height="80.40" fill="#5a8596"/>
<rect x="501.21" y="518.90" width="11.50" height="68.90" fill="#789ca9"/>
<rect x="501.21" y="527.60" width="11.50" height="60.20" fill="#9ab4bf"/>
<rect x="501.21" y="539.10" width="11.50" height="48.70" fill="#fdbc79"/>
<rect x="501.21" y="547.30" width="11.50" height="40.50" fill="#fca84b"/>
<rect x="501.21" y="553.50" width="11.50" height="34.30" fill="#f98f1d"/>
<rect x="501.21" y="559.20" width="11.50" height="28.60" fill="#86dccb"/>
<rect x="501.21" y="568.80" width="11.50" height="19.00" fill="#5ccfba"/>
<rect x="501.21" y="575.20" width="11.50" height="12.60" fill="#3fc4ae"/>
<rect x="516.04" y="499.40" width="11.50" height="88.40" fill="#5a8596"/>
<rect x="516.04" y="513.20" width="11.50" height="74.60" fill="#789ca9"/>
<rect x="516.04" y="522.80" width="11.50" height="65.00" fill="#9ab4bf"/>
<rect x="516.04" y="535.80" width="11.50" height="52.00" fill="#fdbc79"/>
<rect x="516.04" y="541.40" width="11.50" height="46.40" fill="#fca84b"/>
<rect x="516.04" y="546.80" width="11.50" height="41.00" fill="#f98f1d"/>
<rect x="516.04" y="553.50" width="11.50" height="34.30" fill="#86dccb"/>
<rect x="516.04" y="566.90" width="11.50" height="20.90" fill="#5ccfba"/>
<rect x="516.04" y="573.00" width="11.50" height="14.80" fill="#3fc4ae"/>
<rect x="530.87" y="478.70" width="11.50" height="109.10" fill="#5a8596"/>
<rect x="530.87" y="494.90" width="11.50" height="92.90" fill="#789ca9"/>
<rect x="530.87" y="507.80" width="11.50" height="80.00" fill="#9ab4bf"/>
<rect x="530.87" y="520.90" width="11.50" height="66.90" fill="#fdbc79"/>
<rect x="530.87" y="531.00" width="11.50" height="56.80" fill="#fca84b"/>
<rect x="530.87" y="539.10" width="11.50" height="48.70" fill="#f98f1d"/>
<rect x="530.87" y="549.10" width="11.50" height="38.70" fill="#86dccb"/>
<rect x="530.87" y="561.70" width="11.50" height="26.10" fill="#5ccfba"/>
<rect x="530.87" y="569.80" width="11.50" height="18.00" fill="#3fc4ae"/>
<rect x="545.70" y="471.20" width="11.50" height="116.60" fill="#5a8596"/>
<rect x="545.70" y="488.20" width="11.50" height="99.60" fill="#789ca9"/>
<rect x="545.70" y="499.40" width="11.50" height="88.40" fill="#9ab4bf"/>
<rect x="545.70" y="513.20" width="11.50" height="74.60" fill="#fdbc79"/>
<rect x="545.70" y="521.80" width="11.50" height="66.00" fill="#fca84b"/>
<rect x="545.70" y="529.50" width="11.50" height="58.30" fill="#f98f1d"/>
<rect x="545.70" y="540.60" width="11.50" height="47.20" fill="#86dccb"/>
<rect x="545.70" y="557.70" width="11.50" height="30.10" fill="#5ccfba"/>
<rect x="545.70" y="568.20" width="11.50" height="19.60" fill="#3fc4ae"/>
<rect x="560.53" y="466.20" width="11.50" height="121.60" fill="#5a8596"/>
<rect x="560.53" y="483.10" width="11.50" height="104.70" fill="#789ca9"/>
<rect x="560.53" y="496.30" width="11.50" height="91.50" fill="#9ab4bf"/>
<rect x="560.53" y="509.90" width="11.50" height="77.90" fill="#fdbc79"/>
<rect x="560.53" y="518.90" width="11.50" height="68.90" fill="#fca84b"/>
<rect x="560.53" y="530.40" width="11.50" height="57.40" fill="#f98f1d"/>
<rect x="560.53" y="539.10" width="11.50" height="48.70" fill="#86dccb"/>
<rect x="560.53" y="556.90" width="11.50" height="30.90" fill="#5ccfba"/>
<rect x="560.53" y="568.80" width="11.50" height="19.00" fill="#3fc4ae"/>
<rect x="575.36" y="441.80" width="11.50" height="146.00" fill="#5a8596"/>
<rect x="575.36" y="459.10" width="11.50" height="128.70" fill="#789ca9"/>
<rect x="575.36" y="473.50" width="11.50" height="114.30" fill="#9ab4bf"/>
<rect x="575.36" y="488.80" width="11.50" height="99.00" fill="#fdbc79"/>
<rect x="575.36" y="505.10" width="11.50" height="82.70" fill="#fca84b"/>
<rect x="575.36" y="516.60" width="11.50" height="71.20" fill="#f98f1d"/>
<rect x="575.36" y="532.00" width="11.50" height="55.80" fill="#86dccb"/>
<rect x="575.36" y="551.60" width="11.50" height="36.20" fill="#5ccfba"/>
<rect x="575.36" y="565.60" width="11.50" height="22.20" fill="#3fc4ae"/>
<rect x="590.19" y="435.70" width="11.50" height="152.10" fill="#5a8596"/>
<rect x="590.19" y="452.40" width="11.50" height="135.40" fill="#789ca9"/>
<rect x="590.19" y="471.60" width="11.50" height="116.20" fill="#9ab4bf"/>
<rect x="590.19" y="488.30" width="11.50" height="99.50" fill="#fdbc79"/>
<rect x="590.19" y="503.60" width="11.50" height="84.20" fill="#fca84b"/>
<rect x="590.19" y="515.70" width="11.50" height="72.10" fill="#f98f1d"/>
<rect x="590.19" y="530.10" width="11.50" height="57.70" fill="#86dccb"/>
<rect x="590.19" y="546.80" width="11.50" height="41.00" fill="#5ccfba"/>
<rect x="590.19" y="562.70" width="11.50" height="25.10" fill="#3fc4ae"/>
<rect x="605.02" y="447.60" width="11.50" height="140.20" fill="#5a8596"/>
<rect x="605.02" y="465.20" width="11.50" height="122.60" fill="#789ca9"/>
<rect x="605.02" y="485.60" width="11.50" height="102.20" fill="#9ab4bf"/>
<rect x="605.02" y="501.30" width="11.50" height="86.50" fill="#fdbc79"/>
<rect x="605.02" y="507.40" width="11.50" height="80.40" fill="#fca84b"/>
<rect x="605.02" y="518.60" width="11.50" height="69.20" fill="#f98f1d"/>
<rect x="605.02" y="532.90" width="11.50" height="54.90" fill="#86dccb"/>
<rect x="605.02" y="551.00" width="11.50" height="36.80" fill="#5ccfba"/>
<rect x="605.02" y="565.00" width="11.50" height="22.80" fill="#3fc4ae"/>
<rect x="619.85" y="432.60" width="11.50" height="155.20" fill="#5a8596"/>
<rect x="619.85" y="451.80" width="11.50" height="136.00" fill="#789ca9"/>
<rect x="619.85" y="469.60" width="11.50" height="118.20" fill="#9ab4bf"/>
<rect x="619.85" y="486.00" width="11.50" height="101.80" fill="#fdbc79"/>
<rect x="619.85" y="499.00" width="11.50" height="88.80" fill="#fca84b"/>
<rect x="619.85" y="510.70" width="11.50" height="77.10" fill="#f98f1d"/>
<rect x="619.85" y="527.20" width="11.50" height="60.60" fill="#86dccb"/>
<rect x="619.85" y="550.20" width="11.50" height="37.60" fill="#5ccfba"/>
<rect x="619.85" y="564.00" width="11.50" height="23.80" fill="#3fc4ae"/>
<rect x="634.68" y="414.40" width="11.50" height="173.40" fill="#5a8596"/>
<rect x="634.68" y="431.80" width="11.50" height="156.00" fill="#789ca9"/>
<rect x="634.68" y="451.80" width="11.50" height="136.00" fill="#9ab4bf"/>
<rect x="634.68" y="468.70" width="11.50" height="119.10" fill="#fdbc79"/>
<rect x="634.68" y="485.00" width="11.50" height="102.80" fill="#fca84b"/>
<rect x="634.68" y="498.80" width="11.50" height="89.00" fill="#f98f1d"/>
<rect x="634.68" y="520.90" width="11.50" height="66.90" fill="#86dccb"/>
<rect x="634.68" y="542.30" width="11.50" height="45.50" fill="#5ccfba"/>
<rect x="634.68" y="562.10" width="11.50" height="25.70" fill="#3fc4ae"/>
<rect x="649.51" y="405.90" width="11.50" height="181.90" fill="#5a8596"/>
<rect x="649.51" y="425.90" width="11.50" height="161.90" fill="#789ca9"/>
<rect x="649.51" y="448.90" width="11.50" height="138.90" fill="#9ab4bf"/>
<rect x="649.51" y="467.30" width="11.50" height="120.50" fill="#fdbc79"/>
<rect x="649.51" y="484.00" width="11.50" height="103.80" fill="#fca84b"/>
<rect x="649.51" y="496.50" width="11.50" height="91.30" fill="#f98f1d"/>
<rect x="649.51" y="519.50" width="11.50" height="68.30" fill="#86dccb"/>
<rect x="649.51" y="542.90" width="11.50" height="44.90" fill="#5ccfba"/>
<rect x="649.51" y="561.50" width="11.50" height="26.30" fill="#3fc4ae"/>
<rect x="664.34" y="403.80" width="11.50" height="184.00" fill="#5a8596"/>
<rect x="664.34" y="425.10" width="11.50" height="162.70" fill="#789ca9"/>
<rect x="664.34" y="446.00" width="11.50" height="141.80" fill="#9ab4bf"/>
<rect x="664.34" y="462.90" width="11.50" height="124.90" fill="#fdbc79"/>
<rect x="664.34" y="477.30" width="11.50" height="110.50" fill="#fca84b"/>
<rect x="664.34" y="490.70" width="11.50" height="97.10" fill="#f98f1d"/>
<rect x="664.34" y="514.70" width="11.50" height="73.10" fill="#86dccb"/>
<rect x="664.34" y="539.10" width="11.50" height="48.70" fill="#5ccfba"/>
<rect x="664.34" y="557.70" width="11.50" height="30.10" fill="#3fc4ae"/>
<rect x="679.17" y="416.10" width="11.50" height="171.70" fill="#5a8596"/>
<rect x="679.17" y="436.20" width="11.50" height="151.60" fill="#789ca9"/>
<rect x="679.17" y="457.70" width="11.50" height="130.10" fill="#9ab4bf"/>
<rect x="679.17" y="475.50" width="11.50" height="112.30" fill="#fdbc79"/>
<rect x="679.17" y="488.80" width="11.50" height="99.00" fill="#fca84b"/>
<rect x="679.17" y="501.70" width="11.50" height="86.10" fill="#f98f1d"/>
<rect x="679.17" y="522.20" width="11.50" height="65.60" fill="#86dccb"/>
<rect x="679.17" y="543.90" width="11.50" height="43.90" fill="#5ccfba"/>
<rect x="679.17" y="560.60" width="11.50" height="27.20" fill="#3fc4ae"/>
<rect x="694.00" y="400.70" width="11.50" height="187.10" fill="#5a8596"/>
<rect x="694.00" y="421.80" width="11.50" height="166.00" fill="#789ca9"/>
<rect x="694.00" y="441.60" width="11.50" height="146.20" fill="#9ab4bf"/>
<rect x="694.00" y="458.80" width="11.50" height="129.00" fill="#fdbc79"/>
<rect x="694.00" y="480.70" width="11.50" height="107.10" fill="#fca84b"/>
<rect x="694.00" y="491.70" width="11.50" height="96.10" fill="#f98f1d"/>
<rect x="694.00" y="516.10" width="11.50" height="71.70" fill="#86dccb"/>
<rect x="694.00" y="540.00" width="11.50" height="47.80" fill="#5ccfba"/>
<rect x="694.00" y="560.60" width="11.50" height="27.20" fill="#3fc4ae"/>
<rect x="708.83" y="406.50" width="11.50" height="181.30" fill="#5a8596"/>
<rect x="708.83" y="426.60" width="11.50" height="161.20" fill="#789ca9"/>
<rect x="708.83" y="452.50" width="11.50" height="135.30" fill="#9ab4bf"/>
<rect x="708.83" y="471.70" width="11.50" height="116.10" fill="#fdbc79"/>
<rect x="708.83" y="480.00" width="11.50" height="107.80" fill="#fca84b"/>
<rect x="708.83" y="493.60" width="11.50" height="94.20" fill="#f98f1d"/>
<rect x="708.83" y="519.90" width="11.50" height="67.90" fill="#86dccb"/>
<rect x="708.83" y="542.00" width="11.50" height="45.80" fill="#5ccfba"/>
<rect x="708.83" y="559.80" width="11.50" height="28.00" fill="#3fc4ae"/>
<rect x="723.66" y="399.40" width="11.50" height="188.40" fill="#5a8596"/>
<rect x="723.66" y="418.90" width="11.50" height="168.90" fill="#789ca9"/>
<rect x="723.66" y="443.50" width="11.50" height="144.30" fill="#9ab4bf"/>
<rect x="723.66" y="462.10" width="11.50" height="125.70" fill="#fdbc79"/>
<rect x="723.66" y="484.80" width="11.50" height="103.00" fill="#fca84b"/>
<rect x="723.66" y="497.80" width="11.50" height="90.00" fill="#f98f1d"/>
<rect x="723.66" y="517.60" width="11.50" height="70.20" fill="#86dccb"/>
<rect x="723.66" y="541.00" width="11.50" height="46.80" fill="#5ccfba"/>
<rect x="723.66" y="559.80" width="11.50" height="28.00" fill="#3fc4ae"/>
<rect x="738.49" y="402.20" width="11.50" height="185.60" fill="#5a8596"/>
<rect x="738.49" y="421.80" width="11.50" height="166.00" fill="#789ca9"/>
<rect x="738.49" y="444.50" width="11.50" height="143.30" fill="#9ab4bf"/>
<rect x="738.49" y="461.50" width="11.50" height="126.30" fill="#fdbc79"/>
<rect x="738.49" y="479.00" width="11.50" height="108.80" fill="#fca84b"/>
<rect x="738.49" y="493.60" width="11.50" height="94.20" fill="#f98f1d"/>
<rect x="738.49" y="516.40" width="11.50" height="71.40" fill="#86dccb"/>
<rect x="738.49" y="539.10" width="11.50" height="48.70" fill="#5ccfba"/>
<rect x="738.49" y="560.60" width="11.50" height="27.20" fill="#3fc4ae"/>
<rect x="753.32" y="406.50" width="11.50" height="181.30" fill="#5a8596"/>
<rect x="753.32" y="425.30" width="11.50" height="162.50" fill="#789ca9"/>
<rect x="753.32" y="445.20" width="11.50" height="142.60" fill="#9ab4bf"/>
<rect x="753.32" y="465.00" width="11.50" height="122.80" fill="#fdbc79"/>
<rect x="753.32" y="474.20" width="11.50" height="113.60" fill="#fca84b"/>
<rect x="753.32" y="492.60" width="11.50" height="95.20" fill="#f98f1d"/>
<rect x="753.32" y="515.70" width="11.50" height="72.10" fill="#86dccb"/>
<rect x="753.32" y="541.00" width="11.50" height="46.80" fill="#5ccfba"/>
<rect x="753.32" y="559.80" width="11.50" height="28.00" fill="#3fc4ae"/>
<rect x="768.15" y="404.00" width="11.50" height="183.80" fill="#5a8596"/>
<rect x="768.15" y="421.80" width="11.50" height="166.00" fill="#789ca9"/>
<rect x="768.15" y="446.40" width="11.50" height="141.40" fill="#9ab4bf"/>
<rect x="768.15" y="463.10" width="11.50" height="124.70" fill="#fdbc79"/>
<rect x="768.15" y="476.10" width="11.50" height="111.70" fill="#fca84b"/>
<rect x="768.15" y="492.60" width="11.50" height="95.20" fill="#f98f1d"/>
<rect x="768.15" y="510.30" width="11.50" height="77.50" fill="#86dccb"/>
<rect x="768.15" y="535.80" width="11.50" height="52.00" fill="#5ccfba"/>
<rect x="768.15" y="556.40" width="11.50" height="31.40" fill="#3fc4ae"/>
<rect x="782.98" y="383.00" width="11.50" height="204.80" fill="#5a8596"/>
<rect x="782.98" y="402.20" width="11.50" height="185.60" fill="#789ca9"/>
<rect x="782.98" y="426.00" width="11.50" height="161.80" fill="#9ab4bf"/>
<rect x="782.98" y="442.90" width="11.50" height="144.90" fill="#fdbc79"/>
<rect x="782.98" y="469.20" width="11.50" height="118.60" fill="#fca84b"/>
<rect x="782.98" y="487.60" width="11.50" height="100.20" fill="#f98f1d"/>
<rect x="782.98" y="513.80" width="11.50" height="74.00" fill="#86dccb"/>
<rect x="782.98" y="540.00" width="11.50" height="47.80" fill="#5ccfba"/>
<rect x="782.98" y="559.80" width="11.50" height="28.00" fill="#3fc4ae"/>
<rect x="797.81" y="393.40" width="11.50" height="194.40" fill="#5a8596"/>
<rect x="797.81" y="413.80" width="11.50" height="174.00" fill="#789ca9"/>
<rect x="797.81" y="439.50" width="11.50" height="148.30" fill="#9ab4bf"/>
<rect x="797.81" y="456.90" width="11.50" height="130.90" fill="#fdbc79"/>
<rect x="797.81" y="474.60" width="11.50" height="113.20" fill="#fca84b"/>
<rect x="797.81" y="492.10" width="11.50" height="95.70" fill="#f98f1d"/>
<rect x="797.81" y="517.60" width="11.50" height="70.20" fill="#86dccb"/>
<rect x="797.81" y="542.00" width="11.50" height="45.80" fill="#5ccfba"/>
<rect x="797.81" y="561.20" width="11.50" height="26.60" fill="#3fc4ae"/>
<rect x="812.64" y="399.40" width="11.50" height="188.40" fill="#5a8596"/>
<rect x="812.64" y="418.90" width="11.50" height="168.90" fill="#789ca9"/>
<rect x="812.64" y="441.60" width="11.50" height="146.20" fill="#9ab4bf"/>
<rect x="812.64" y="456.90" width="11.50" height="130.90" fill="#fdbc79"/>
<rect x="812.64" y="474.60" width="11.50" height="113.20" fill="#fca84b"/>
<rect x="812.64" y="489.80" width="11.50" height="98.00" fill="#f98f1d"/>
<rect x="812.64" y="514.10" width="11.50" height="73.70" fill="#86dccb"/>
<rect x="812.64" y="538.70" width="11.50" height="49.10" fill="#5ccfba"/>
<rect x="812.64" y="559.20" width="11.50" height="28.60" fill="#3fc4ae"/>
<rect x="827.47" y="388.80" width="11.50" height="199.00" fill="#5a8596"/>
<rect x="827.47" y="411.80" width="11.50" height="176.00" fill="#789ca9"/>
<rect x="827.47" y="438.50" width="11.50" height="149.30" fill="#9ab4bf"/>
<rect x="827.47" y="455.40" width="11.50" height="132.40" fill="#fdbc79"/>
<rect x="827.47" y="477.50" width="11.50" height="110.30" fill="#fca84b"/>
<rect x="827.47" y="493.60" width="11.50" height="94.20" fill="#f98f1d"/>
<rect x="827.47" y="517.60" width="11.50" height="70.20" fill="#86dccb"/>
<rect x="827.47" y="539.10" width="11.50" height="48.70" fill="#5ccfba"/>
<rect x="827.47" y="556.90" width="11.50" height="30.90" fill="#3fc4ae"/>
<rect x="842.30" y="387.30" width="11.50" height="200.50" fill="#5a8596"/>
<rect x="842.30" y="407.80" width="11.50" height="180.00" fill="#789ca9"/>
<rect x="842.30" y="435.60" width="11.50" height="152.20" fill="#9ab4bf"/>
<rect x="842.30" y="453.10" width="11.50" height="134.70" fill="#fdbc79"/>
<rect x="842.30" y="477.80" width="11.50" height="110.00" fill="#fca84b"/>
<rect x="842.30" y="492.60" width="11.50" height="95.20" fill="#f98f1d"/>
<rect x="842.30" y="516.60" width="11.50" height="71.20" fill="#86dccb"/>
<rect x="842.30" y="542.90" width="11.50" height="44.90" fill="#5ccfba"/>
<rect x="842.30" y="559.80" width="11.50" height="28.00" fill="#3fc4ae"/>
<rect x="857.13" y="407.70" width="11.50" height="180.10" fill="#5a8596"/>
<rect x="857.13" y="426.70" width="11.50" height="161.10" fill="#789ca9"/>
<rect x="857.13" y="450.30" width="11.50" height="137.50" fill="#9ab4bf"/>
<rect x="857.13" y="465.10" width="11.50" height="122.70" fill="#fdbc79"/>
<rect x="857.13" y="481.40" width="11.50" height="106.40" fill="#fca84b"/>
<rect x="857.13" y="495.50" width="11.50" height="92.30" fill="#f98f1d"/>
<rect x="857.13" y="522.80" width="11.50" height="65.00" fill="#86dccb"/>
<rect x="857.13" y="541.00" width="11.50" height="46.80" fill="#5ccfba"/>
<rect x="857.13" y="562.20" width="11.50" height="25.60" fill="#3fc4ae"/>
<rect x="871.96" y="401.70" width="11.50" height="186.10" fill="#5a8596"/>
<rect x="871.96" y="422.90" width="11.50" height="164.90" fill="#789ca9"/>
<rect x="871.96" y="443.60" width="11.50" height="144.20" fill="#9ab4bf"/>
<rect x="871.96" y="459.90" width="11.50" height="127.90" fill="#fdbc79"/>
<rect x="871.96" y="477.80" width="11.50" height="110.00" fill="#fca84b"/>
<rect x="871.96" y="483.80" width="11.50" height="104.00" fill="#f98f1d"/>
<rect x="871.96" y="503.00" width="11.50" height="84.80" fill="#86dccb"/>
<rect x="871.96" y="528.20" width="11.50" height="59.60" fill="#5ccfba"/>
<rect x="871.96" y="557.90" width="11.50" height="29.90" fill="#3fc4ae"/>
<rect x="886.79" y="397.10" width="11.50" height="190.70" fill="#5a8596"/>
<rect x="886.79" y="419.00" width="11.50" height="168.80" fill="#789ca9"/>
<rect x="886.79" y="440.30" width="11.50" height="147.50" fill="#9ab4bf"/>
<rect x="886.79" y="458.60" width="11.50" height="129.20" fill="#fdbc79"/>
<rect x="886.79" y="490.20" width="11.50" height="97.60" fill="#fca84b"/>
<rect x="886.79" y="504.00" width="11.50" height="83.80" fill="#f98f1d"/>
<rect x="886.79" y="520.90" width="11.50" height="66.90" fill="#86dccb"/>
<rect x="886.79" y="540.10" width="11.50" height="47.70" fill="#5ccfba"/>
<rect x="886.79" y="557.90" width="11.50" height="29.90" fill="#3fc4ae"/>
<rect x="901.62" y="386.00" width="11.50" height="201.80" fill="#5a8596"/>
<rect x="901.62" y="406.70" width="11.50" height="181.10" fill="#789ca9"/>
<rect x="901.62" y="428.80" width="11.50" height="159.00" fill="#9ab4bf"/>
<rect x="901.62" y="445.90" width="11.50" height="141.90" fill="#fdbc79"/>
<rect x="901.62" y="461.30" width="11.50" height="126.50" fill="#fca84b"/>
<rect x="901.62" y="484.40" width="11.50" height="103.40" fill="#f98f1d"/>
<rect x="901.62" y="517.60" width="11.50" height="70.20" fill="#86dccb"/>
<rect x="901.62" y="538.70" width="11.50" height="49.10" fill="#5ccfba"/>
<rect x="901.62" y="562.20" width="11.50" height="25.60" fill="#3fc4ae"/>
<rect x="916.45" y="370.30" width="11.50" height="217.50" fill="#5a8596"/>
<rect x="916.45" y="394.60" width="11.50" height="193.20" fill="#789ca9"/>
<rect x="916.45" y="420.00" width="11.50" height="167.80" fill="#9ab4bf"/>
<rect x="916.45" y="436.90" width="11.50" height="150.90" fill="#fdbc79"/>
<rect x="916.45" y="465.10" width="11.50" height="122.70" fill="#fca84b"/>
<rect x="916.45" y="479.10" width="11.50" height="108.70" fill="#f98f1d"/>
<rect x="916.45" y="502.30" width="11.50" height="85.50" fill="#86dccb"/>
<rect x="916.45" y="528.20" width="11.50" height="59.60" fill="#5ccfba"/>
<rect x="916.45" y="552.60" width="11.50" height="35.20" fill="#3fc4ae"/>
<rect x="931.28" y="377.90" width="7.22" height="209.90" fill="#5a8596"/>
<rect x="931.28" y="399.80" width="7.22" height="188.00" fill="#789ca9"/>
<rect x="931.28" y="432.50" width="7.22" height="155.30" fill="#9ab4bf"/>
<rect x="931.28" y="447.80" width="7.22" height="140.00" fill="#fdbc79"/>
<rect x="931.28" y="473.00" width="7.22" height="114.80" fill="#fca84b"/>
<rect x="931.28" y="481.50" width="7.22" height="106.30" fill="#f98f1d"/>
<rect x="931.28" y="505.90" width="7.22" height="81.90" fill="#86dccb"/>
<rect x="931.28" y="530.10" width="7.22" height="57.70" fill="#5ccfba"/>
<rect x="931.28" y="558.30" width="7.22" height="29.50" fill="#3fc4ae"/></g>
  <rect x="272.6" y="358.7" width="665.4" height="1" fill="#d6d6d6"/>
  <rect x="272.6" y="587.6" width="665.4" height="1" fill="#d6d6d6"/>
  <rect x="937.4" y="115" width="0.8" height="245" fill="#e8e8e8"/><rect x="937.4" y="588" width="0.8" height="15" fill="#e0e0e0"/><rect x="940.2" y="607" width="0.8" height="12" fill="#ececec"/>
  <text class="tx" x="0" y="0" font-size="9.1" fill="#2a2a2a" stroke="#2a2a2a" font-weight="normal" font-style="normal" text-anchor="middle"  style="stroke-width:0.08px" transform="translate(288.4,242.9) rotate(-90) scale(1,1.12)">Count of Number of Records</text>
  <text class="tx" x="0" y="0" font-size="9.1" fill="#2a2a2a" stroke="#2a2a2a" font-weight="normal" font-style="normal" text-anchor="middle"  style="stroke-width:0.08px" transform="translate(288.4,472.8) rotate(-90) scale(1,1.12)">Avg. Tenure</text>
  <defs><clipPath id="xl"><rect x="300" y="585" width="637.8" height="25"/></clipPath></defs>
  <g clip-path="url(#xl)"><text class="tx" x="343.8" y="601" font-size="9.7" fill="#666" stroke="#666" font-weight="normal" font-style="normal" text-anchor="middle"  style="stroke:none">8</text>
<text class="tx" x="373.5" y="601" font-size="9.7" fill="#666" stroke="#666" font-weight="normal" font-style="normal" text-anchor="middle"  style="stroke:none">18</text>
<text class="tx" x="403.1" y="601" font-size="9.7" fill="#666" stroke="#666" font-weight="normal" font-style="normal" text-anchor="middle"  style="stroke:none">20</text>
<text class="tx" x="432.8" y="601" font-size="9.7" fill="#666" stroke="#666" font-weight="normal" font-style="normal" text-anchor="middle"  style="stroke:none">22</text>
<text class="tx" x="462.5" y="601" font-size="9.7" fill="#666" stroke="#666" font-weight="normal" font-style="normal" text-anchor="middle"  style="stroke:none">24</text>
<text class="tx" x="492.1" y="601" font-size="9.7" fill="#666" stroke="#666" font-weight="normal" font-style="normal" text-anchor="middle"  style="stroke:none">26</text>
<text class="tx" x="521.8" y="601" font-size="9.7" fill="#666" stroke="#666" font-weight="normal" font-style="normal" text-anchor="middle"  style="stroke:none">28</text>
<text class="tx" x="551.5" y="601" font-size="9.7" fill="#666" stroke="#666" font-weight="normal" font-style="normal" text-anchor="middle"  style="stroke:none">30</text>
<text class="tx" x="581.1" y="601" font-size="9.7" fill="#666" stroke="#666" font-weight="normal" font-style="normal" text-anchor="middle"  style="stroke:none">32</text>
<text class="tx" x="610.8" y="601" font-size="9.7" fill="#666" stroke="#666" font-weight="normal" font-style="normal" text-anchor="middle"  style="stroke:none">34</text>
<text class="tx" x="640.4" y="601" font-size="9.7" fill="#666" stroke="#666" font-weight="normal" font-style="normal" text-anchor="middle"  style="stroke:none">36</text>
<text class="tx" x="670.1" y="601" font-size="9.7" fill="#666" stroke="#666" font-weight="normal" font-style="normal" text-anchor="middle"  style="stroke:none">38</text>
<text class="tx" x="699.8" y="601" font-size="9.7" fill="#666" stroke="#666" font-weight="normal" font-style="normal" text-anchor="middle"  style="stroke:none">40</text>
<text class="tx" x="729.4" y="601" font-size="9.7" fill="#666" stroke="#666" font-weight="normal" font-style="normal" text-anchor="middle"  style="stroke:none">42</text>
<text class="tx" x="759.1" y="601" font-size="9.7" fill="#666" stroke="#666" font-weight="normal" font-style="normal" text-anchor="middle"  style="stroke:none">44</text>
<text class="tx" x="788.7" y="601" font-size="9.7" fill="#666" stroke="#666" font-weight="normal" font-style="normal" text-anchor="middle"  style="stroke:none">46</text>
<text class="tx" x="818.4" y="601" font-size="9.7" fill="#666" stroke="#666" font-weight="normal" font-style="normal" text-anchor="middle"  style="stroke:none">48</text>
<text class="tx" x="848.0" y="601" font-size="9.7" fill="#666" stroke="#666" font-weight="normal" font-style="normal" text-anchor="middle"  style="stroke:none">50</text>
<text class="tx" x="877.7" y="601" font-size="9.7" fill="#666" stroke="#666" font-weight="normal" font-style="normal" text-anchor="middle"  style="stroke:none">52</text>
<text class="tx" x="907.4" y="601" font-size="9.7" fill="#666" stroke="#666" font-weight="normal" font-style="normal" text-anchor="middle"  style="stroke:none">54</text>
<text class="tx" x="937.0" y="601" font-size="9.7" fill="#666" stroke="#666" font-weight="normal" font-style="normal" text-anchor="middle"  style="stroke:none">56</text></g>
  <rect x="322" y="606.7" width="618.6" height="0.9" fill="#ececec"/>
  <rect x="322" y="618.6" width="618.6" height="0.9" fill="#ececec"/>
  <rect x="322.5" y="610.5" width="403.5" height="5.8" rx="2.9" fill="#c4c4c4"/>
  <!-- right legends -->
  <rect x="949.8" y="80.6" width="113.3" height="167.6" fill="#ffffff" stroke="#dedede" stroke-width="0.9"/>
  <rect x="950.3" y="81.1" width="112.4" height="20.9" fill="#f5f5f5"/>
  <text class="tx" x="955" y="94.7" font-size="9.3" fill="#333" stroke="#333" font-weight="normal" font-style="normal" text-anchor="start"  >Department</text>
  <rect x="949.8" y="253.6" width="113.3" height="156.4" fill="#ffffff" stroke="#dedede" stroke-width="0.9"/>
  <rect x="950.3" y="254.1" width="112.4" height="21" fill="#f5f5f5"/>
  <text class="tx" x="955" y="267.9" font-size="9.3" fill="#333" stroke="#333" font-weight="normal" font-style="normal" text-anchor="start"  >Department</text>
  <circle cx="959.4" cy="111.2" r="4.3" fill="#fff" stroke="#cfcfcf" stroke-width="0.9"/>
<circle cx="959.4" cy="111.2" r="4.3" fill="#fff" stroke="#555" stroke-width="0.9"/><circle cx="959.4" cy="111.2" r="2" fill="#444"/>
<text class="tx" x="969.6" y="114.1" font-size="9.3" fill="#333" stroke="#333" font-weight="normal" font-style="normal" text-anchor="start"  >(All)</text>
<circle cx="959.4" cy="125.3" r="4.3" fill="#fff" stroke="#cfcfcf" stroke-width="0.9"/>
<text class="tx" x="969.6" y="128.2" font-size="9.3" fill="#333" stroke="#333" font-weight="normal" font-style="normal" text-anchor="start"  >Accounting</text>
<circle cx="959.4" cy="139.4" r="4.3" fill="#fff" stroke="#cfcfcf" stroke-width="0.9"/>
<text class="tx" x="969.6" y="142.3" font-size="9.3" fill="#333" stroke="#333" font-weight="normal" font-style="normal" text-anchor="start"  >Customer Support</text>
<circle cx="959.4" cy="153.5" r="4.3" fill="#fff" stroke="#cfcfcf" stroke-width="0.9"/>
<text class="tx" x="969.6" y="156.4" font-size="9.3" fill="#333" stroke="#333" font-weight="normal" font-style="normal" text-anchor="start"  >Distribution</text>
<circle cx="959.4" cy="167.6" r="4.3" fill="#fff" stroke="#cfcfcf" stroke-width="0.9"/>
<text class="tx" x="969.6" y="170.5" font-size="9.3" fill="#333" stroke="#333" font-weight="normal" font-style="normal" text-anchor="start"  >Finance</text>
<circle cx="959.4" cy="181.7" r="4.3" fill="#fff" stroke="#cfcfcf" stroke-width="0.9"/>
<text class="tx" x="969.6" y="184.6" font-size="9.3" fill="#333" stroke="#333" font-weight="normal" font-style="normal" text-anchor="start"  >International</text>
<circle cx="959.4" cy="195.8" r="4.3" fill="#fff" stroke="#cfcfcf" stroke-width="0.9"/>
<text class="tx" x="969.6" y="198.7" font-size="9.3" fill="#333" stroke="#333" font-weight="normal" font-style="normal" text-anchor="start"  >Marketing</text>
<circle cx="959.4" cy="209.9" r="4.3" fill="#fff" stroke="#cfcfcf" stroke-width="0.9"/>
<text class="tx" x="969.6" y="212.8" font-size="9.3" fill="#333" stroke="#333" font-weight="normal" font-style="normal" text-anchor="start"  >Operations</text>
<circle cx="959.4" cy="224.0" r="4.3" fill="#fff" stroke="#cfcfcf" stroke-width="0.9"/>
<text class="tx" x="969.6" y="226.9" font-size="9.3" fill="#333" stroke="#333" font-weight="normal" font-style="normal" text-anchor="start"  >Production</text>
<circle cx="959.4" cy="238.1" r="4.3" fill="#fff" stroke="#cfcfcf" stroke-width="0.9"/>
<text class="tx" x="969.6" y="241.0" font-size="9.3" fill="#333" stroke="#333" font-weight="normal" font-style="normal" text-anchor="start"  >Sales</text>
<rect x="952.6" y="278.0" width="10.2" height="10.2" fill="#5a8596"/>
<text class="tx" x="967" y="286.5" font-size="9.3" fill="#333" stroke="#333" font-weight="normal" font-style="normal" text-anchor="start"  >Accounting</text>
<rect x="952.6" y="292.8" width="10.2" height="10.2" fill="#789ca9"/>
<text class="tx" x="967" y="301.3" font-size="9.3" fill="#333" stroke="#333" font-weight="normal" font-style="normal" text-anchor="start"  >Customer Support</text>
<rect x="952.6" y="307.6" width="10.2" height="10.2" fill="#9ab4bf"/>
<text class="tx" x="967" y="316.1" font-size="9.3" fill="#333" stroke="#333" font-weight="normal" font-style="normal" text-anchor="start"  >Distribution</text>
<rect x="952.6" y="322.4" width="10.2" height="10.2" fill="#fdbc79"/>
<text class="tx" x="967" y="330.9" font-size="9.3" fill="#333" stroke="#333" font-weight="normal" font-style="normal" text-anchor="start"  >Finance</text>
<rect x="952.6" y="337.2" width="10.2" height="10.2" fill="#fca84b"/>
<text class="tx" x="967" y="345.7" font-size="9.3" fill="#333" stroke="#333" font-weight="normal" font-style="normal" text-anchor="start"  >International</text>
<rect x="952.6" y="352.0" width="10.2" height="10.2" fill="#f98f1d"/>
<text class="tx" x="967" y="360.5" font-size="9.3" fill="#333" stroke="#333" font-weight="normal" font-style="normal" text-anchor="start"  >Marketing</text>
<rect x="952.6" y="366.8" width="10.2" height="10.2" fill="#86dccb"/>
<text class="tx" x="967" y="375.3" font-size="9.3" fill="#333" stroke="#333" font-weight="normal" font-style="normal" text-anchor="start"  >Operations</text>
<rect x="952.6" y="381.6" width="10.2" height="10.2" fill="#5ccfba"/>
<text class="tx" x="967" y="390.1" font-size="9.3" fill="#333" stroke="#333" font-weight="normal" font-style="normal" text-anchor="start"  >Production</text>
<rect x="952.6" y="396.4" width="10.2" height="10.2" fill="#3fc4ae"/>
<text class="tx" x="967" y="404.9" font-size="9.3" fill="#333" stroke="#333" font-weight="normal" font-style="normal" text-anchor="start"  >Sales</text>
  <rect x="35.3" y="2" width="1" height="25" fill="#dedede"/>
<rect x="200.4" y="2" width="1" height="25" fill="#dedede"/>
<rect x="293.1" y="2" width="1" height="25" fill="#dedede"/>
<rect x="374.8" y="2" width="1" height="25" fill="#dedede"/>
<rect x="576.7" y="2" width="1" height="25" fill="#dedede"/>
<rect x="639.8" y="2" width="1" height="25" fill="#dedede"/>
<path d="M12.60,11.40 Q14.78,10.98 15.20,8.80 Q15.62,10.98 17.80,11.40 Q15.62,11.82 15.20,14.00 Q14.78,11.82 12.60,11.40Z" fill="#f2a43a"/><path d="M15.50,14.30 Q18.02,13.82 18.50,11.30 Q18.98,13.82 21.50,14.30 Q18.98,14.78 18.50,17.30 Q18.02,14.78 15.50,14.30Z" fill="#f2a43a"/><path d="M13.00,17.30 Q15.18,16.88 15.60,14.70 Q16.02,16.88 18.20,17.30 Q16.02,17.72 15.60,19.90 Q15.18,17.72 13.00,17.30Z" fill="#f2a43a"/><path d="M19.10,11.40 Q21.12,11.02 21.50,9.00 Q21.88,11.02 23.90,11.40 Q21.88,11.78 21.50,13.80 Q21.12,11.78 19.10,11.40Z" fill="#4f8aa0"/><path d="M19.10,17.30 Q21.12,16.92 21.50,14.90 Q21.88,16.92 23.90,17.30 Q21.88,17.68 21.50,19.70 Q21.12,17.68 19.10,17.30Z" fill="#4f8aa0"/><path d="M17.10,9.60 Q18.28,9.38 18.50,8.20 Q18.72,9.38 19.90,9.60 Q18.72,9.82 18.50,11.00 Q18.28,9.82 17.10,9.60Z" fill="#7d98a6"/><path d="M21.90,14.30 Q23.08,14.08 23.30,12.90 Q23.52,14.08 24.70,14.30 Q23.52,14.52 23.30,15.70 Q23.08,14.52 21.90,14.30Z" fill="#4f8aa0"/><path d="M11.80,14.30 Q12.98,14.08 13.20,12.90 Q13.42,14.08 14.60,14.30 Q13.42,14.52 13.20,15.70 Q12.98,14.52 11.80,14.30Z" fill="#7d98a6"/><path d="M17.10,19.30 Q18.28,19.08 18.50,17.90 Q18.72,19.08 19.90,19.30 Q18.72,19.52 18.50,20.70 Q18.28,19.52 17.10,19.30Z" fill="#777"/>
<path d="M47,14.5 H58.6 M52.5,9 L47,14.5 L52.5,20" fill="none" stroke="#555" stroke-width="1.3"/>
<path d="M70.4,14.5 H82 M76.5,9 L82,14.5 L76.5,20" fill="none" stroke="#aaa" stroke-width="1.1"/>
<rect x="94.6" y="8.8" width="11" height="11.4" rx="0.8" fill="none" stroke="#666" stroke-width="1"/>
<rect x="96.6" y="17" width="5.5" height="3" fill="none" stroke="#777" stroke-width="0.8"/>
<path d="M118,10.6 V18.1 Q118,20.1 122.3,20.1 M126.6,10.6 V15.1 M118,10.6 Q118,8.6 122.3,8.6 Q126.6,8.6 126.6,10.6 Q126.6,12.6 122.3,12.6 Q118,12.6 118,10.6" fill="none" stroke="#777" stroke-width="0.9"/>
<path d="M124.4,18.5 H129.4 M126.9,16 V21" stroke="#333" stroke-width="1.6"/>
<path d="M141,10.6 V18.1 Q141,20.1 145.3,20.1 M149.6,10.6 V15.1 M141,10.6 Q141,8.6 145.3,8.6 Q149.6,8.6 149.6,10.6 Q149.6,12.6 145.3,12.6 Q141,12.6 141,10.6" fill="none" stroke="#777" stroke-width="0.9"/>
<rect x="146.6" y="16.2" width="1.5" height="4.8" fill="#333"/><rect x="149.1" y="16.2" width="1.5" height="4.8" fill="#333"/>
<path d="M159.2,13.3 L163.2,13.3 L161.2,15.8Z" fill="#555"/>
<path d="M169.5,13 A6,5.6 0 0 1 180.5,12 M181,16 A6,5.6 0 0 1 170,17" fill="none" stroke="#c4c4c4" stroke-width="1"/>
<path d="M188.9,13.3 L192.9,13.3 L190.9,15.8Z" fill="#bbb"/>
<rect x="208.5" y="8.2" width="11.3" height="11.8" rx="0.8" fill="none" stroke="#777" stroke-width="0.9"/><rect x="211.0" y="16.0" width="1" height="2.5" fill="#888"/><rect x="213.3" y="13.5" width="1" height="5" fill="#888"/><rect x="215.5" y="12.0" width="1.6" height="6.5" fill="#bbb"/>
<path d="M217,18.5 H222.5 M219.75,15.8 V21.2" stroke="#222" stroke-width="1.6"/>
<path d="M228.8,13.100000000000001 L232.8,13.100000000000001 L230.8,15.600000000000001Z" fill="#555"/>
<rect x="243.2" y="8.2" width="10.4" height="7.4" rx="0.8" fill="#f3f3f3" stroke="#777" stroke-width="0.9"/>
<rect x="246" y="11" width="0.9" height="3" fill="#777"/><rect x="248.3" y="10" width="0.9" height="4" fill="#777"/><rect x="250.6" y="10.8" width="0.9" height="3.2" fill="#777"/>
<rect x="240.2" y="12.6" width="9.8" height="7.8" rx="0.8" fill="#f3f3f3" stroke="#777" stroke-width="0.9"/>
<rect x="241.8" y="17.5" width="6.5" height="1.6" fill="#aaa"/>
<rect x="262.5" y="8.2" width="11.3" height="11.8" rx="0.8" fill="none" stroke="#777" stroke-width="0.9"/><rect x="265.0" y="16.0" width="1" height="2.5" fill="#888"/><rect x="267.3" y="13.5" width="1" height="5" fill="#888"/><rect x="269.5" y="12.0" width="1.6" height="6.5" fill="#bbb"/>
<path d="M271,16.2 L275.6,20.8 M275.6,16.2 L271,20.8" stroke="#222" stroke-width="1.5"/>
<path d="M282.2,13.100000000000001 L286.2,13.100000000000001 L284.2,15.600000000000001Z" fill="#555"/>
<rect x="303.95" y="8.6" width="2.7" height="2.6" rx="1.1" fill="none" stroke="#777" stroke-width="0.75"/>
<rect x="308.25" y="8.6" width="2.7" height="2.6" rx="1.1" fill="none" stroke="#777" stroke-width="0.75"/>
<rect x="312.54999999999995" y="8.6" width="2.7" height="2.6" rx="1.1" fill="none" stroke="#777" stroke-width="0.75"/>
<rect x="303.95" y="12.799999999999999" width="2.7" height="2.6" rx="1.1" fill="none" stroke="#777" stroke-width="0.75"/>
<rect x="303.95" y="17.0" width="2.7" height="2.6" rx="1.1" fill="none" stroke="#777" stroke-width="0.75"/>
<path d="M309.6,20.1 Q313.8,19.6 315.6,14.8" fill="none" stroke="#555" stroke-width="0.95"/><path d="M314.4,13.6 L316.6,15.4 L314.5,16.2Z" fill="#555"/><circle cx="309.6" cy="20.1" r="0.9" fill="#555"/>
<rect x="328.9" y="9.2" width="0.9" height="9.4" fill="#777"/><circle cx="329.35" cy="19" r="0.95" fill="#555"/>
<rect x="331.8" y="9.3" width="3.6" height="2.1" rx="0.7" fill="none" stroke="#888" stroke-width="0.75"/>
<rect x="331.8" y="13" width="8.2" height="2.5" rx="0.7" fill="none" stroke="#888" stroke-width="0.75"/>
<rect x="331.8" y="16.8" width="9" height="2.6" rx="0.7" fill="#d0d0d0" stroke="#888" stroke-width="0.75"/>
<rect x="352" y="9.2" width="0.9" height="9.4" fill="#777"/><circle cx="352.45" cy="19" r="0.95" fill="#555"/>
<rect x="354.9" y="9.3" width="9.2" height="2.2" rx="0.7" fill="none" stroke="#888" stroke-width="0.75"/>
<rect x="354.9" y="12.8" width="7" height="2.2" rx="0.7" fill="none" stroke="#888" stroke-width="0.75"/>
<rect x="354.9" y="16.3" width="4.6" height="3" rx="0.7" fill="#d0d0d0" stroke="#888" stroke-width="0.75"/>
<path d="M389.2,19 L390,15.8 L395.2,9.4 L397,10.8 L391.8,17.2 Z" fill="none" stroke="#666" stroke-width="0.9"/><rect x="388.2" y="20.3" width="8.3" height="1" fill="#666"/>
<path d="M403.2,13.3 L407.2,13.3 L405.2,15.8Z" fill="#555"/>
<path d="M417,18 L423.5,10.5 Q425.5,8.6 426.5,10.8 Q427,12 425.6,13.5 L419.8,19.8 Q418.4,21 417.6,20 Q416.8,19 418,17.6 L423,12" fill="none" stroke="#c2c2c2" stroke-width="1"/>
<path d="M432.9,13.3 L436.9,13.3 L434.9,15.8Z" fill="#bbb"/>
<rect x="445.4" y="9.5" width="12.2" height="9.6" fill="none" stroke="#a0a0a0" stroke-width="0.8" stroke-dasharray="1,1.1"/>
<path d="M448.9,11.7 H454 M451.45,11.7 V16.9 M450.4,16.9 H452.5" fill="none" stroke="#555" stroke-width="0.9"/>
<path d="M474.3,9.6 L478.9,12 L476.1,14.4 L476.2,17.6 L470.4,15.3 L473.3,14.3 Z" fill="none" stroke="#555" stroke-width="0.95" stroke-linejoin="round"/>
<path d="M473.4,16.4 L471.2,20" stroke="#555" stroke-width="0.95"/>
<rect x="493.5" y="6" width="72" height="16.6" rx="1.5" fill="#f7f7f7" stroke="#d8d8d8" stroke-width="1"/>
<rect x="551" y="6.5" width="0.8" height="15.6" fill="#e2e2e2"/>
<text x="498.7" y="18" font-size="9.4" fill="#333">Standard</text>
<path d="M556.3,13.100000000000001 L560.3,13.100000000000001 L558.3,15.600000000000001Z" fill="#444"/>
<rect x="586.2" y="8.899999999999999" width="3.2" height="2.6" rx="1.1" fill="none" stroke="#777" stroke-width="0.8"/>
<rect x="586.2" y="13.0" width="3.2" height="2.6" rx="1.1" fill="none" stroke="#777" stroke-width="0.8"/>
<rect x="586.2" y="17.099999999999998" width="3.2" height="2.6" rx="1.1" fill="none" stroke="#777" stroke-width="0.8"/>
<rect x="591.6" y="9.4" width="9.4" height="10.4" rx="0.6" fill="none" stroke="#777" stroke-width="0.9"/>
<rect x="594" y="15.5" width="0.9" height="3" fill="#888"/><rect x="596" y="12" width="0.9" height="6.5" fill="#888"/><rect x="598" y="13.5" width="1.2" height="5" fill="#bbb"/>
<path d="M604.6,13.3 L608.6,13.3 L606.6,15.8Z" fill="#555"/>
<rect x="617.2" y="9.4" width="12.8" height="1.4" fill="#777"/><rect x="618.8" y="10.6" width="9.6" height="6.8" fill="none" stroke="#777" stroke-width="0.9"/><rect x="623.1" y="17.4" width="0.9" height="2.6" fill="#777"/><rect x="620.5" y="20" width="6" height="0.9" fill="#777"/>
<path d="M654.3,14.5 L660.8,10.8 M654.3,14.5 L660.8,18.3" stroke="#555" stroke-width="0.9"/>
<circle cx="654.3" cy="14.5" r="2.1" fill="#f3f3f3" stroke="#555" stroke-width="0.9"/>
<circle cx="660.8" cy="10.8" r="2.1" fill="#f3f3f3" stroke="#555" stroke-width="0.9"/>
<circle cx="660.8" cy="18.3" r="2.1" fill="#f3f3f3" stroke="#555" stroke-width="0.9"/>
<rect x="994.7" y="9" width="8.1" height="1.6" fill="#888"/>
<rect x="994.7" y="12.1" width="10.2" height="1.6" fill="#5aaebf"/>
<rect x="994.7" y="14.8" width="3" height="2" fill="#f0b060"/><rect x="994.7" y="17.6" width="6" height="2" fill="#f0b060"/>
<text x="1009.8" y="18.1" font-size="9.0" fill="#333">Show Me</text>
</svg>
</div>
</body></html>
